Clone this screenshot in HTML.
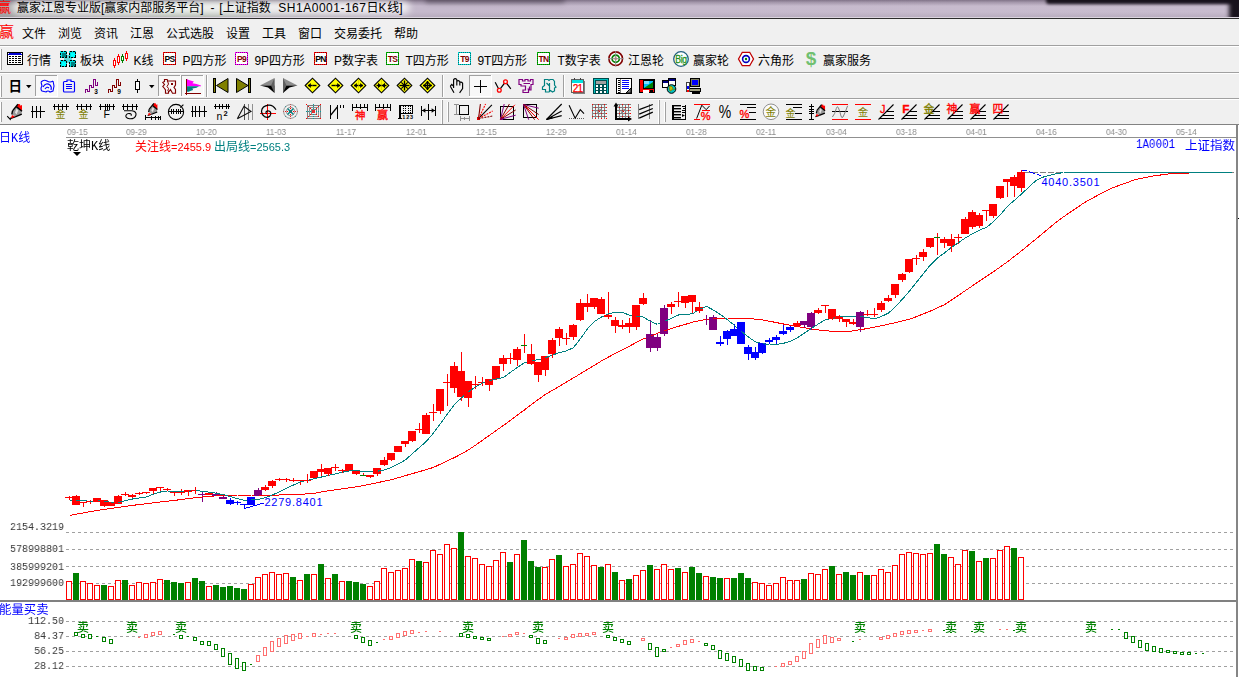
<!DOCTYPE html>
<html lang="zh"><head><meta charset="utf-8"><title>赢家江恩专业版</title>
<style>
html,body{margin:0;padding:0}
body{width:1239px;height:677px;overflow:hidden;background:#fff;position:relative;font-family:"Liberation Sans","Noto Sans CJK SC",sans-serif;font-size:12px;color:#000}
.abs{position:absolute}
#title{position:absolute;left:0;top:0;width:1239px;height:18px;overflow:hidden;
background:
 linear-gradient(to bottom, rgba(86,72,94,.62) 0, rgba(110,96,118,.38) 2.5px, rgba(150,132,156,0) 6px, rgba(120,108,126,0) 12px, rgba(100,90,106,.14) 17px),
 linear-gradient(to right, #a8a8a8 0, #bdbdbd 100px, #b5c0b3 190px, #bdb9c0 290px, #c5b9cc 420px, #c8bcce 1239px);}
#title .blob3{position:absolute;left:425px;top:-3px;width:140px;height:6px;background:rgba(40,30,46,.42);filter:blur(2.5px);border-radius:3px}
#title .blob{position:absolute;left:1046px;top:-4px;width:200px;height:7.5px;background:#18121c;filter:blur(1.6px);border-radius:3px}
#title .blob2{position:absolute;left:1229px;top:-3px;width:14px;height:24px;background:#18121c;filter:blur(2.2px)}
#title .glow{position:absolute;left:12px;top:1px;width:398px;height:13px;border-radius:7px;background:rgba(255,255,255,.78);filter:blur(3.5px)}
#title .tx{position:absolute;left:17px;top:0px;font-size:12px;line-height:16px;white-space:pre;color:#000}
#title .ic{position:absolute;left:-3px;top:-2px;font-size:14px;line-height:18px;color:#ff0000}
#tline{position:absolute;left:0;top:17px;width:1239px;height:1px;background:#dcd5df}
#tline2{position:absolute;left:0;top:18px;width:1239px;height:1px;background:#2c2c2c;box-shadow:0 1px 0 #fafafa}
.bar{position:absolute;left:0;width:1239px;background:#f0f0f0}
.hl{position:absolute;left:0;width:1239px;height:1px}
.menu span{position:absolute;top:8px;line-height:14px;font-size:12px;white-space:nowrap}
.tbt{position:absolute;font-size:12px;line-height:14px;white-space:nowrap}
.grip{position:absolute;width:1px;background:#a0a0a0;box-shadow:-1px 0 0 #fff}
.dt{will-change:transform;position:absolute;top:126.5px;font-size:9px;line-height:10px;color:#8c8c8c;font-family:"Liberation Sans",sans-serif;transform:scaleX(.9);transform-origin:0 0}
.gs{will-change:transform}
.cj{font-family:"Noto Sans CJK SC","WenQuanYi Zen Hei",sans-serif}
.mono{font-family:"Liberation Mono","Noto Sans CJK SC",monospace}
.sell{will-change:transform;position:absolute;top:620px;font-size:12px;line-height:14px;color:#008000;font-weight:500;font-family:"Noto Sans CJK SC",sans-serif}
.ylab{will-change:transform;position:absolute;left:9.5px;width:62.2px;font-family:"Liberation Mono",monospace;font-size:11.5px;line-height:12px;color:#383838;text-align:left;letter-spacing:0px;white-space:pre;transform:scaleX(.87);transform-origin:0 0}
</style></head><body>
<div id="title"><div class="blob"></div><div class="blob3"></div><div class="blob2"></div><div class="glow"></div><span class="ic">赢</span><span class="tx">赢家江恩专业版[赢家内部服务平台]<span style="letter-spacing:3.4px"> </span>-<span style="letter-spacing:1.6px"> </span>[上证指数<span style="letter-spacing:.5px">  SH1A0001-167</span>日<span style="letter-spacing:.8px">K</span>线]</span></div>
<div id="tline"></div><div id="tline2"></div>
<div class="bar menu" style="top:19px;height:26px">
<span style="left:-1px;top:5px;font-size:15px;line-height:16px;color:#ff0000">赢</span>
<span style="left:22px">文件</span><span style="left:58px">浏览</span><span style="left:94px">资讯</span><span style="left:130px">江恩</span><span style="left:166px">公式选股</span><span style="left:226px">设置</span><span style="left:262px">工具</span><span style="left:298px">窗口</span><span style="left:334px">交易委托</span><span style="left:394px">帮助</span>
</div>
<div class="hl" style="top:45px;background:#a0a0a0"></div><div class="hl" style="top:46px;background:#fff"></div>
<div class="bar" style="top:47px;height:25px"></div>
<div class="hl" style="top:72px;background:#a0a0a0"></div><div class="hl" style="top:73px;background:#fff"></div>
<div class="bar" style="top:74px;height:24px"></div>
<div class="hl" style="top:98px;background:#a0a0a0"></div><div class="hl" style="top:99px;background:#fff"></div>
<div class="bar" style="top:100px;height:24px"></div>
<div class="hl" style="top:124px;background:#828282"></div>
<span class="tbt" style="left:27px;top:54px;">行情</span><span class="tbt" style="left:80px;top:54px;">板块</span><span class="tbt" style="left:133.5px;top:54px;">K线</span><span class="tbt" style="left:182.5px;top:54px;">P四方形</span><span class="tbt" style="left:254.5px;top:54px;letter-spacing:-.1px">9P四方形</span><span class="tbt" style="left:334px;top:54px;">P数字表</span><span class="tbt" style="left:405.5px;top:54px;">T四方形</span><span class="tbt" style="left:477.5px;top:54px;letter-spacing:-.1px">9T四方形</span><span class="tbt" style="left:557.5px;top:54px;">T数字表</span><span class="tbt" style="left:628px;top:54px;">江恩轮</span><span class="tbt" style="left:693px;top:54px;">赢家轮</span><span class="tbt" style="left:758px;top:54px;">六角形</span><span class="tbt" style="left:823px;top:54px;">赢家服务</span><svg class="abs" style="left:0;top:0" width="1239" height="125" viewBox="0 0 1239 125"><g shape-rendering="crispEdges"><rect x="1" y="49" width="1" height="21" fill="#a0a0a0"/>
<rect x="0" y="49" width="1" height="21" fill="#ffffff"/>
<rect x="7.5" y="52.5" width="15" height="12" fill="#fff" stroke="#000" stroke-width="1" />
<rect x="8" y="53" width="14" height="2" fill="#0000d0" />
<rect x="8" y="53" width="1" height="1" fill="#fff" />
<rect x="21" y="53" width="1" height="1" fill="#fff" />
<rect x="9" y="56" width="2" height="1" fill="#000" />
<rect x="12" y="56" width="2" height="1" fill="#000" />
<rect x="15" y="56" width="2" height="1" fill="#000" />
<rect x="18" y="56" width="3" height="1" fill="#000" />
<rect x="9" y="58" width="2" height="1" fill="#000" />
<rect x="12" y="58" width="2" height="1" fill="#000" />
<rect x="15" y="58" width="2" height="1" fill="#000" />
<rect x="18" y="58" width="3" height="1" fill="#000" />
<rect x="9" y="60" width="2" height="1" fill="#000" />
<rect x="12" y="60" width="2" height="1" fill="#000" />
<rect x="15" y="60" width="2" height="1" fill="#000" />
<rect x="18" y="60" width="3" height="1" fill="#000" />
<rect x="9" y="62" width="2" height="1" fill="#000" />
<rect x="12" y="62" width="2" height="1" fill="#000" />
<rect x="15" y="62" width="2" height="1" fill="#000" />
<rect x="18" y="62" width="3" height="1" fill="#000" />
<rect x="64" y="55" width="8" height="8" fill="#60d8d8" />
<rect x="60" y="51" width="7" height="7" fill="#00e0e0" />
<rect x="60.5" y="51.5" width="6" height="6" fill="none" stroke="#000" stroke-dasharray="2 1"/>
<rect x="61" y="52" width="5" height="5" fill="#00e0e0" />
<rect x="62" y="53" width="4" height="4" fill="#008080" />
<rect x="69" y="51" width="7" height="7" fill="#00e0e0" />
<rect x="69.5" y="51.5" width="6" height="6" fill="none" stroke="#000" stroke-dasharray="2 1"/>
<rect x="70" y="52" width="5" height="5" fill="#00e0e0" />
<rect x="71" y="53" width="4" height="4" fill="#00ffff" />
<rect x="60" y="60" width="7" height="7" fill="#00e0e0" />
<rect x="60.5" y="60.5" width="6" height="6" fill="none" stroke="#000" stroke-dasharray="2 1"/>
<rect x="61" y="61" width="5" height="5" fill="#00e0e0" />
<rect x="62" y="62" width="4" height="4" fill="#00ffff" />
<rect x="69" y="60" width="7" height="7" fill="#00e0e0" />
<rect x="69.5" y="60.5" width="6" height="6" fill="none" stroke="#000" stroke-dasharray="2 1"/>
<rect x="70" y="61" width="5" height="5" fill="#00e0e0" />
<rect x="71" y="62" width="4" height="4" fill="#008080" />
<rect x="114" y="58" width="1" height="10" fill="#ff0000"/>
<rect x="113.5" y="60.5" width="2" height="5" fill="#fff" stroke="#ff0000" stroke-width="1" />
<rect x="118" y="54" width="1" height="11" fill="#ff0000"/>
<rect x="117.5" y="56.5" width="2" height="6" fill="#fff" stroke="#ff0000" stroke-width="1" />
<rect x="122" y="54" width="1" height="9" fill="#008000"/>
<rect x="121.5" y="56.5" width="2" height="4" fill="#fff" stroke="#008000" stroke-width="1" />
<rect x="126" y="51" width="1" height="10" fill="#ff0000"/>
<rect x="125.5" y="53.5" width="2" height="5" fill="#fff" stroke="#ff0000" stroke-width="1" />
<rect x="163" y="52" width="13" height="13" fill="#fff" />
<rect x="163.5" y="52.5" width="12" height="12" fill="none" stroke="#ff0000"/>
<rect x="163.5" y="52.5" width="12" height="12" fill="none" stroke="#000" stroke-opacity=".45" stroke-dasharray="1 1"/>
<rect x="235" y="52" width="13" height="13" fill="#fff" />
<rect x="235.5" y="52.5" width="12" height="12" fill="none" stroke="#ff00ff"/>
<rect x="235.5" y="52.5" width="12" height="12" fill="none" stroke="#000" stroke-opacity=".45" stroke-dasharray="1 1"/>
<rect x="314" y="52" width="13" height="13" fill="#fff" />
<rect x="314.5" y="52.5" width="12" height="12" fill="none" stroke="#ff0000"/>
<rect x="314.5" y="52.5" width="12" height="12" fill="none" stroke="#000" stroke-opacity=".45" stroke-dasharray="1 1"/>
<rect x="386" y="52" width="13" height="13" fill="#fff" />
<rect x="386.5" y="52.5" width="12" height="12" fill="none" stroke="#00c000"/>
<rect x="386.5" y="52.5" width="12" height="12" fill="none" stroke="#000" stroke-opacity=".45" stroke-dasharray="1 1"/>
<rect x="458" y="52" width="13" height="13" fill="#fff" />
<rect x="458.5" y="52.5" width="12" height="12" fill="none" stroke="#00d8d8"/>
<rect x="458.5" y="52.5" width="12" height="12" fill="none" stroke="#000" stroke-opacity=".45" stroke-dasharray="1 1"/>
<rect x="537" y="52" width="13" height="13" fill="#fff" />
<rect x="537.5" y="52.5" width="12" height="12" fill="none" stroke="#00c000"/>
<rect x="537.5" y="52.5" width="12" height="12" fill="none" stroke="#000" stroke-opacity=".45" stroke-dasharray="1 1"/>
<rect x="1" y="76" width="1" height="21" fill="#a0a0a0"/>
<rect x="0" y="76" width="1" height="21" fill="#ffffff"/>
<rect x="35" y="75" width="23" height="22" fill="#f8f8f8" />
<rect x="35" y="75" width="23" height="1" fill="#a0a0a0"/>
<rect x="35" y="75" width="1" height="22" fill="#a0a0a0"/>
<rect x="35" y="96" width="23" height="1" fill="#fff"/>
<rect x="57" y="75" width="1" height="22" fill="#fff"/>
<rect x="66" y="84.0" width="6" height="1" fill="#0000ff"/>
<rect x="66" y="86.0" width="6" height="1" fill="#0000ff"/>
<rect x="66" y="88.0" width="6" height="1" fill="#0000ff"/>
<polyline points="85.5,93 85.5,89.5 87.5,89.5 87.5,91.5 89.5,91.5 89.5,85.5 91.5,85.5 91.5,87.5 93.5,87.5 93.5,79.5 95.5,79.5 95.5,85.5 97.5,85.5 97.5,81.5" fill="none" stroke="#800080" stroke-width="1.3" />
<polyline points="108.5,93 108.5,89.5 110.5,89.5 110.5,91.5 112.5,91.5 112.5,85.5 114.5,85.5 114.5,87.5 116.5,87.5 116.5,79.5 118.5,79.5 118.5,85.5 120.5,85.5 120.5,81.5" fill="none" stroke="#800000" stroke-width="1.3" />
<rect x="137" y="79" width="1" height="14" fill="#000"/>
<rect x="135.5" y="81.5" width="4" height="8" fill="#fff" stroke="#000" stroke-width="1" />
<rect x="158" y="75" width="23" height="22" fill="#f8f8f8" />
<rect x="158" y="75" width="23" height="1" fill="#a0a0a0"/>
<rect x="158" y="75" width="1" height="22" fill="#a0a0a0"/>
<rect x="158" y="96" width="23" height="1" fill="#fff"/>
<rect x="180" y="75" width="1" height="22" fill="#fff"/>
<rect x="171" y="83" width="2" height="2" fill="#800000" />
<rect x="181" y="75" width="23" height="22" fill="#f8f8f8" />
<rect x="181" y="75" width="23" height="1" fill="#a0a0a0"/>
<rect x="181" y="75" width="1" height="22" fill="#a0a0a0"/>
<rect x="181" y="96" width="23" height="1" fill="#fff"/>
<rect x="203" y="75" width="1" height="22" fill="#fff"/>
<rect x="186" y="79" width="1" height="16" fill="#800000"/>
<rect x="185" y="93" width="16" height="1" fill="#800000"/>
<rect x="206" y="75" width="1" height="22" fill="#a0a0a0"/>
<rect x="207" y="75" width="1" height="22" fill="#ffffff"/>
<rect x="213.5" y="78.5" width="2" height="14" fill="#808000" stroke="#000" stroke-width="1" />
<rect x="248.5" y="78.5" width="2" height="14" fill="#808000" stroke="#000" stroke-width="1" />
<rect x="442" y="75" width="1" height="22" fill="#a0a0a0"/>
<rect x="443" y="75" width="1" height="22" fill="#ffffff"/>
<rect x="469" y="75" width="23" height="22" fill="#f8f8f8" />
<rect x="469" y="75" width="23" height="1" fill="#a0a0a0"/>
<rect x="469" y="75" width="1" height="22" fill="#a0a0a0"/>
<rect x="469" y="96" width="23" height="1" fill="#fff"/>
<rect x="491" y="75" width="1" height="22" fill="#fff"/>
<rect x="474" y="86" width="13" height="1" fill="#000"/>
<rect x="480" y="80" width="1" height="13" fill="#000"/>
<rect x="563" y="75" width="1" height="22" fill="#a0a0a0"/>
<rect x="564" y="75" width="1" height="22" fill="#ffffff"/>
<rect x="573" y="81" width="12" height="13" fill="#808080" />
<rect x="571.5" y="79.5" width="12" height="13" fill="#fff" stroke="#606060" stroke-width="1" />
<rect x="572" y="80" width="11" height="3" fill="#00e0e0" />
<rect x="574" y="78" width="1" height="2" fill="#404040"/>
<rect x="580" y="78" width="1" height="2" fill="#404040"/>
<rect x="593.5" y="78.5" width="15" height="15" fill="#00c0c0" stroke="#004848" stroke-width="1" />
<rect x="595" y="80" width="12" height="13" fill="#005050" />
<rect x="596" y="81" width="10" height="3" fill="#a0a0a0" />
<rect x="596" y="85" width="2" height="2" fill="#fff" />
<rect x="600" y="85" width="2" height="2" fill="#fff" />
<rect x="604" y="85" width="2" height="2" fill="#fff" />
<rect x="596" y="88" width="2" height="2" fill="#fff" />
<rect x="600" y="88" width="2" height="2" fill="#fff" />
<rect x="604" y="88" width="2" height="2" fill="#fff" />
<rect x="596" y="91" width="2" height="2" fill="#fff" />
<rect x="600" y="91" width="2" height="2" fill="#fff" />
<rect x="604" y="91" width="2" height="2" fill="#fff" />
<rect x="616.5" y="78.5" width="15" height="15" fill="#fff" stroke="#000" stroke-width="1" />
<rect x="622" y="80" width="7" height="1" fill="#0000ff"/>
<rect x="622" y="82" width="7" height="1" fill="#0000ff"/>
<rect x="622" y="84" width="7" height="1" fill="#0000ff"/>
<rect x="622" y="86" width="7" height="1" fill="#0000ff"/>
<rect x="622" y="88" width="7" height="1" fill="#0000ff"/>
<rect x="618" y="80" width="2" height="1" fill="#000" />
<rect x="618" y="82" width="2" height="1" fill="#000" />
<rect x="618" y="84" width="2" height="1" fill="#000" />
<rect x="618" y="86" width="2" height="1" fill="#000" />
<rect x="618" y="88" width="2" height="1" fill="#000" />
<rect x="618" y="90" width="2" height="1" fill="#000" />
<rect x="618" y="92" width="2" height="1" fill="#000" />
<rect x="620" y="79" width="1" height="14" fill="#808080"/>
<rect x="639.5" y="79.5" width="15" height="13" fill="#ff0000" stroke="#000" stroke-width="1" />
<rect x="643.5" y="80.5" width="10" height="8" fill="#00c0ff" stroke="#000" stroke-width="1" />
<rect x="644" y="81" width="5" height="3" fill="#80e0ff" />
<rect x="643" y="90" width="6" height="3" fill="#fff" />
<rect x="650" y="90" width="3" height="3" fill="#000" />
<rect x="662.5" y="80.5" width="7" height="7" fill="#fff" stroke="#000" stroke-width="1" />
<rect x="663" y="81" width="6" height="2" fill="#000080" />
<rect x="668.5" y="78.5" width="7" height="7" fill="#fff" stroke="#000" stroke-width="1" />
<rect x="669" y="79" width="6" height="2" fill="#000080" />
<rect x="690.5" y="78.5" width="9" height="8" fill="#808060" stroke="#000" stroke-width="1" />
<rect x="692" y="80" width="6" height="5" fill="#0000ff" />
<rect x="688.5" y="88.5" width="12" height="3" fill="#a0a080" stroke="#000" stroke-width="1" />
<rect x="692" y="92" width="8" height="2" fill="#000" />
<rect x="686.5" y="82.5" width="3" height="9" fill="#fff" stroke="#404040" stroke-width="1" />
<rect x="687" y="86" width="2" height="3" fill="#0000ff" />
<rect x="687" y="90" width="2" height="2" fill="#ff0000" />
<rect x="1" y="102" width="1" height="20" fill="#a0a0a0"/>
<rect x="0" y="102" width="1" height="20" fill="#ffffff"/>
<rect x="31" y="111" width="14" height="1" fill="#000"/>
<rect x="32" y="106" width="1" height="12" fill="#000"/>
<rect x="36" y="106" width="1" height="12" fill="#000"/>
<rect x="40" y="106" width="1" height="12" fill="#000"/>
<rect x="53" y="106" width="16" height="1" fill="#000"/>
<rect x="54" y="104" width="1" height="6" fill="#000"/>
<rect x="58" y="104" width="1" height="6" fill="#000"/>
<rect x="62" y="104" width="1" height="6" fill="#000"/>
<rect x="66" y="104" width="1" height="6" fill="#000"/>
<rect x="76" y="106" width="16" height="1" fill="#000"/>
<rect x="77" y="104" width="1" height="6" fill="#000"/>
<rect x="81" y="104" width="1" height="6" fill="#000"/>
<rect x="86" y="104" width="1" height="6" fill="#000"/>
<rect x="90" y="104" width="1" height="6" fill="#000"/>
<rect x="99" y="106" width="16" height="1" fill="#000"/>
<rect x="100" y="104" width="1" height="6" fill="#000"/>
<rect x="105" y="104" width="1" height="6" fill="#000"/>
<rect x="107" y="104" width="1" height="6" fill="#000"/>
<rect x="109" y="104" width="1" height="6" fill="#000"/>
<rect x="113" y="104" width="1" height="6" fill="#000"/>
<rect x="122" y="106" width="16" height="1" fill="#000"/>
<rect x="123" y="104" width="1" height="6" fill="#000"/>
<rect x="127" y="104" width="1" height="6" fill="#000"/>
<rect x="132" y="104" width="1" height="6" fill="#000"/>
<rect x="136" y="104" width="1" height="6" fill="#000"/>
<rect x="145" y="117" width="16" height="1" fill="#000"/>
<rect x="145" y="115" width="1" height="5" fill="#000"/>
<rect x="151" y="116" width="1" height="4" fill="#000"/>
<rect x="155" y="116" width="1" height="4" fill="#000"/>
<rect x="158" y="116" width="1" height="4" fill="#000"/>
<rect x="160" y="116" width="1" height="4" fill="#000"/>
<rect x="169" y="111" width="15" height="1" fill="#000"/>
<rect x="171" y="109" width="1" height="5" fill="#000"/>
<rect x="173" y="109" width="1" height="5" fill="#000"/>
<rect x="176" y="109" width="1" height="5" fill="#000"/>
<rect x="178" y="109" width="1" height="5" fill="#000"/>
<rect x="180" y="109" width="1" height="5" fill="#000"/>
<rect x="191" y="111" width="16" height="1" fill="#000"/>
<rect x="192" y="106" width="1" height="11" fill="#000"/>
<rect x="195" y="106" width="1" height="11" fill="#000"/>
<rect x="199" y="106" width="1" height="11" fill="#000"/>
<rect x="204" y="106" width="1" height="11" fill="#000"/>
<rect x="214" y="106" width="16" height="1" fill="#000"/>
<rect x="215" y="104" width="1" height="5" fill="#000"/>
<rect x="219" y="104" width="1" height="5" fill="#000"/>
<rect x="222" y="104" width="1" height="5" fill="#000"/>
<rect x="226" y="104" width="1" height="5" fill="#000"/>
<rect x="228" y="104" width="1" height="5" fill="#000"/>
<rect x="244" y="104" width="1" height="16" fill="#505050"/>
<rect x="248" y="104" width="1" height="16" fill="#808080"/>
<rect x="252" y="104" width="1" height="16" fill="#909090"/>
<rect x="260" y="113" width="16" height="1" fill="#ff0000"/>
<rect x="267" y="104" width="1" height="16" fill="#ff0000"/>
<line x1="283.0" y1="111.5" x2="298.0" y2="111.5" stroke="#ff0000" stroke-dasharray="1 1"/>
<line x1="290.5" y1="104.0" x2="290.5" y2="119.0" stroke="#ff0000" stroke-dasharray="1 1"/>
<rect x="285" y="106" width="1" height="1" fill="#00a0a0" />
<rect x="295" y="106" width="1" height="1" fill="#00a0a0" />
<rect x="285" y="116" width="1" height="1" fill="#00a0a0" />
<rect x="295" y="116" width="1" height="1" fill="#00a0a0" />
<rect x="289" y="110" width="3" height="3" fill="#ff0000" />
<rect x="307.0" y="105.0" width="13.0" height="13.0" fill="none" stroke="#808080"/>
<rect x="309.0" y="107.0" width="9.0" height="9.0" fill="none" stroke="#909090"/>
<rect x="311.0" y="109.0" width="5.0" height="5.0" fill="none" stroke="#808080"/>
<line x1="306.0" y1="111.5" x2="321.0" y2="111.5" stroke="#00a0a0" stroke-dasharray="1 1"/>
<line x1="313.5" y1="104.0" x2="313.5" y2="119.0" stroke="#00a0a0" stroke-dasharray="1 1"/>
<rect x="306" y="104" width="1" height="1" fill="#ff0000" />
<rect x="306" y="118" width="1" height="1" fill="#ff0000" />
<rect x="308" y="106" width="1" height="1" fill="#ff0000" />
<rect x="308" y="116" width="1" height="1" fill="#ff0000" />
<rect x="310" y="108" width="1" height="1" fill="#ff0000" />
<rect x="310" y="114" width="1" height="1" fill="#ff0000" />
<rect x="316" y="114" width="1" height="1" fill="#ff0000" />
<rect x="316" y="108" width="1" height="1" fill="#ff0000" />
<rect x="318" y="116" width="1" height="1" fill="#ff0000" />
<rect x="318" y="106" width="1" height="1" fill="#ff0000" />
<rect x="320" y="118" width="1" height="1" fill="#ff0000" />
<rect x="320" y="104" width="1" height="1" fill="#ff0000" />
<rect x="312" y="110" width="3" height="3" fill="#e03030" />
<rect x="330" y="105" width="1" height="14" fill="#000"/>
<rect x="337" y="105" width="1" height="14" fill="#000"/>
<rect x="340" y="105" width="1" height="3" fill="#000"/>
<rect x="343" y="105" width="1" height="3" fill="#000"/>
<rect x="352" y="107" width="16" height="1" fill="#000"/>
<rect x="352" y="104" width="1" height="7" fill="#000"/>
<rect x="356" y="104" width="1" height="4" fill="#000"/>
<rect x="360" y="104" width="1" height="5" fill="#000"/>
<rect x="364" y="104" width="1" height="4" fill="#000"/>
<rect x="367" y="104" width="1" height="7" fill="#000"/>
<rect x="375" y="107" width="16" height="1" fill="#000"/>
<rect x="375" y="104" width="1" height="7" fill="#000"/>
<rect x="379" y="104" width="1" height="4" fill="#000"/>
<rect x="383" y="104" width="1" height="5" fill="#000"/>
<rect x="387" y="104" width="1" height="4" fill="#000"/>
<rect x="390" y="104" width="1" height="7" fill="#000"/>
<rect x="399" y="105" width="1" height="14" fill="#000"/>
<rect x="400" y="105" width="1" height="14" fill="#000"/>
<rect x="412" y="105" width="1" height="9" fill="#000"/>
<rect x="399" y="105" width="14" height="1" fill="#000"/>
<rect x="401" y="113" width="12" height="1" fill="#000"/>
<line x1="403.5" y1="106" x2="403.5" y2="113" stroke="#000" stroke-dasharray="1 1"/>
<line x1="405.5" y1="106" x2="405.5" y2="113" stroke="#000" stroke-dasharray="1 1"/>
<line x1="408.5" y1="106" x2="408.5" y2="113" stroke="#000" stroke-dasharray="1 1"/>
<line x1="410.5" y1="106" x2="410.5" y2="113" stroke="#000" stroke-dasharray="1 1"/>
<rect x="398" y="118" width="4" height="1" fill="#000"/>
<rect x="421" y="106" width="1" height="10" fill="#000"/>
<rect x="428" y="104" width="1" height="16" fill="#000"/>
<rect x="435" y="106" width="1" height="10" fill="#000"/>
<rect x="421" y="110" width="15" height="1" fill="#000"/>
<rect x="441" y="100" width="1" height="24" fill="#fff"/>
<rect x="442" y="100" width="1" height="24" fill="#a0a0a0"/>
<rect x="448" y="102" width="1" height="20" fill="#a0a0a0"/>
<rect x="447" y="102" width="1" height="20" fill="#ffffff"/>
<rect x="459.5" y="105.5" width="9" height="9" fill="none" stroke="#000" stroke-width="1.5"/>
<rect x="456" y="104" width="1" height="11" fill="#909090"/>
<rect x="454" y="104" width="5" height="1" fill="#909090"/>
<rect x="454" y="114" width="5" height="1" fill="#909090"/>
<rect x="460" y="118" width="10" height="1" fill="#909090"/>
<rect x="460" y="116" width="1" height="5" fill="#909090"/>
<rect x="469" y="116" width="1" height="5" fill="#909090"/>
<rect x="464" y="117" width="1" height="3" fill="#909090"/>
<rect x="477" y="117" width="3" height="3" fill="#e00000" />
<rect x="500.5" y="106.5" width="13" height="13" fill="none" stroke="#000" stroke-width="1.5"/>
<rect x="500" y="117" width="3" height="3" fill="#800080" />
<rect x="523.5" y="104.5" width="13" height="13" fill="none" stroke="#000" stroke-width="1.5"/>
<line x1="569" y1="118.5" x2="585" y2="118.5" stroke="#606060" stroke-dasharray="1 1"/>
<rect x="592" y="104" width="15" height="15" fill="#808080" />
<rect x="593" y="105" width="2" height="2" fill="#f4f4f4" />
<rect x="593" y="108" width="2" height="2" fill="#f4f4f4" />
<rect x="593" y="111" width="2" height="2" fill="#f4f4f4" />
<rect x="593" y="114" width="2" height="2" fill="#f4f4f4" />
<rect x="593" y="117" width="2" height="2" fill="#f4f4f4" />
<rect x="596" y="105" width="2" height="2" fill="#f4f4f4" />
<rect x="596" y="108" width="2" height="2" fill="#f4f4f4" />
<rect x="596" y="111" width="2" height="2" fill="#f4f4f4" />
<rect x="596" y="114" width="2" height="2" fill="#f4f4f4" />
<rect x="596" y="117" width="2" height="2" fill="#f4f4f4" />
<rect x="599" y="105" width="2" height="2" fill="#f4f4f4" />
<rect x="599" y="108" width="2" height="2" fill="#f4f4f4" />
<rect x="599" y="111" width="2" height="2" fill="#f4f4f4" />
<rect x="599" y="114" width="2" height="2" fill="#f4f4f4" />
<rect x="599" y="117" width="2" height="2" fill="#f4f4f4" />
<rect x="602" y="105" width="2" height="2" fill="#f4f4f4" />
<rect x="602" y="108" width="2" height="2" fill="#f4f4f4" />
<rect x="602" y="111" width="2" height="2" fill="#f4f4f4" />
<rect x="602" y="114" width="2" height="2" fill="#f4f4f4" />
<rect x="602" y="117" width="2" height="2" fill="#f4f4f4" />
<rect x="605" y="105" width="2" height="2" fill="#f4f4f4" />
<rect x="605" y="108" width="2" height="2" fill="#f4f4f4" />
<rect x="605" y="111" width="2" height="2" fill="#f4f4f4" />
<rect x="605" y="114" width="2" height="2" fill="#f4f4f4" />
<rect x="605" y="117" width="2" height="2" fill="#f4f4f4" />
<rect x="592" y="104" width="1" height="1" fill="#ff0000" />
<rect x="592" y="110" width="1" height="1" fill="#ff0000" />
<rect x="592" y="116" width="1" height="1" fill="#ff0000" />
<rect x="595" y="107" width="1" height="1" fill="#ff0000" />
<rect x="595" y="113" width="1" height="1" fill="#ff0000" />
<rect x="595" y="118" width="1" height="1" fill="#ff0000" />
<rect x="598" y="104" width="1" height="1" fill="#ff0000" />
<rect x="598" y="110" width="1" height="1" fill="#ff0000" />
<rect x="598" y="116" width="1" height="1" fill="#ff0000" />
<rect x="601" y="107" width="1" height="1" fill="#ff0000" />
<rect x="601" y="113" width="1" height="1" fill="#ff0000" />
<rect x="601" y="118" width="1" height="1" fill="#ff0000" />
<rect x="604" y="104" width="1" height="1" fill="#ff0000" />
<rect x="604" y="110" width="1" height="1" fill="#ff0000" />
<rect x="604" y="116" width="1" height="1" fill="#ff0000" />
<rect x="606" y="107" width="1" height="1" fill="#ff0000" />
<rect x="606" y="113" width="1" height="1" fill="#ff0000" />
<rect x="606" y="118" width="1" height="1" fill="#ff0000" />
<rect x="599" y="111" width="1" height="1" fill="#ff0000" />
<rect x="616" y="104" width="15" height="15" fill="#808080" />
<rect x="617" y="105" width="2" height="2" fill="#f4f4f4" />
<rect x="617" y="108" width="2" height="2" fill="#f4f4f4" />
<rect x="617" y="111" width="2" height="2" fill="#f4f4f4" />
<rect x="617" y="114" width="2" height="2" fill="#f4f4f4" />
<rect x="617" y="117" width="2" height="2" fill="#f4f4f4" />
<rect x="620" y="105" width="2" height="2" fill="#f4f4f4" />
<rect x="620" y="108" width="2" height="2" fill="#f4f4f4" />
<rect x="620" y="111" width="2" height="2" fill="#f4f4f4" />
<rect x="620" y="114" width="2" height="2" fill="#f4f4f4" />
<rect x="620" y="117" width="2" height="2" fill="#f4f4f4" />
<rect x="623" y="105" width="2" height="2" fill="#f4f4f4" />
<rect x="623" y="108" width="2" height="2" fill="#f4f4f4" />
<rect x="623" y="111" width="2" height="2" fill="#f4f4f4" />
<rect x="623" y="114" width="2" height="2" fill="#f4f4f4" />
<rect x="623" y="117" width="2" height="2" fill="#f4f4f4" />
<rect x="626" y="105" width="2" height="2" fill="#f4f4f4" />
<rect x="626" y="108" width="2" height="2" fill="#f4f4f4" />
<rect x="626" y="111" width="2" height="2" fill="#f4f4f4" />
<rect x="626" y="114" width="2" height="2" fill="#f4f4f4" />
<rect x="626" y="117" width="2" height="2" fill="#f4f4f4" />
<rect x="629" y="105" width="2" height="2" fill="#f4f4f4" />
<rect x="629" y="108" width="2" height="2" fill="#f4f4f4" />
<rect x="629" y="111" width="2" height="2" fill="#f4f4f4" />
<rect x="629" y="114" width="2" height="2" fill="#f4f4f4" />
<rect x="629" y="117" width="2" height="2" fill="#f4f4f4" />
<rect x="616" y="104" width="1" height="1" fill="#ff0000" />
<rect x="616" y="110" width="1" height="1" fill="#ff0000" />
<rect x="616" y="116" width="1" height="1" fill="#ff0000" />
<rect x="619" y="107" width="1" height="1" fill="#ff0000" />
<rect x="619" y="113" width="1" height="1" fill="#ff0000" />
<rect x="619" y="118" width="1" height="1" fill="#ff0000" />
<rect x="622" y="104" width="1" height="1" fill="#ff0000" />
<rect x="622" y="110" width="1" height="1" fill="#ff0000" />
<rect x="622" y="116" width="1" height="1" fill="#ff0000" />
<rect x="625" y="107" width="1" height="1" fill="#ff0000" />
<rect x="625" y="113" width="1" height="1" fill="#ff0000" />
<rect x="625" y="118" width="1" height="1" fill="#ff0000" />
<rect x="628" y="104" width="1" height="1" fill="#ff0000" />
<rect x="628" y="110" width="1" height="1" fill="#ff0000" />
<rect x="628" y="116" width="1" height="1" fill="#ff0000" />
<rect x="630" y="107" width="1" height="1" fill="#ff0000" />
<rect x="630" y="113" width="1" height="1" fill="#ff0000" />
<rect x="630" y="118" width="1" height="1" fill="#ff0000" />
<rect x="623" y="111" width="1" height="1" fill="#ff0000" />
<rect x="615" y="105" width="1" height="15" fill="#000"/>
<rect x="616" y="105" width="1" height="15" fill="#000"/>
<rect x="615" y="118" width="15" height="1" fill="#000"/>
<rect x="615" y="119" width="15" height="1" fill="#000"/>
<rect x="638" y="104" width="1" height="15" fill="#808080"/>
<rect x="649" y="104" width="1" height="15" fill="#808080"/>
<rect x="658" y="100" width="1" height="24" fill="#fff"/>
<rect x="659" y="100" width="1" height="24" fill="#a0a0a0"/>
<rect x="665" y="102" width="1" height="20" fill="#a0a0a0"/>
<rect x="664" y="102" width="1" height="20" fill="#ffffff"/>
<rect x="672" y="105" width="1" height="15" fill="#000"/>
<rect x="673" y="105" width="1" height="15" fill="#000"/>
<rect x="674" y="105" width="7" height="1" fill="#000" />
<rect x="674" y="106" width="7" height="1" fill="#909090" />
<rect x="674" y="108" width="7" height="1" fill="#000" />
<rect x="674" y="109" width="7" height="1" fill="#909090" />
<rect x="674" y="111" width="7" height="1" fill="#000" />
<rect x="674" y="112" width="7" height="1" fill="#909090" />
<rect x="674" y="114" width="7" height="1" fill="#000" />
<rect x="674" y="115" width="7" height="1" fill="#909090" />
<rect x="674" y="117" width="7" height="1" fill="#000" />
<rect x="674" y="118" width="7" height="1" fill="#909090" />
<rect x="672" y="119" width="14" height="1" fill="#000"/>
<rect x="685" y="105" width="1" height="15" fill="#000"/>
<rect x="682" y="106" width="3" height="1" fill="#000" />
<rect x="683" y="108" width="2" height="1" fill="#000" />
<rect x="682" y="110" width="3" height="1" fill="#000" />
<rect x="682" y="112" width="3" height="1" fill="#000" />
<rect x="694" y="104" width="16" height="1" fill="#ff0000"/>
<rect x="694" y="119" width="6" height="1" fill="#ff0000"/>
<rect x="702" y="110" width="8" height="1" fill="#ff0000"/>
<rect x="740" y="104" width="16" height="1" fill="#000"/>
<rect x="740" y="119" width="16" height="1" fill="#000"/>
<rect x="747" y="107" width="9" height="1" fill="#000"/>
<rect x="749" y="112" width="7" height="1" fill="#000"/>
<rect x="786" y="104" width="16" height="1" fill="#000"/>
<rect x="786" y="119" width="16" height="1" fill="#000"/>
<rect x="793" y="107" width="9" height="1" fill="#000"/>
<rect x="795" y="113" width="7" height="1" fill="#000"/>
<rect x="811" y="104" width="1" height="16" fill="#000"/>
<rect x="809" y="106" width="5" height="1" fill="#000"/>
<rect x="809" y="109" width="5" height="1" fill="#000"/>
<rect x="809" y="111" width="5" height="1" fill="#000"/>
<rect x="809" y="113" width="5" height="1" fill="#000"/>
<rect x="809" y="119" width="5" height="1" fill="#000"/>
<rect x="832" y="104" width="16" height="1" fill="#ff0000"/>
<rect x="832" y="119" width="16" height="1" fill="#ff0000"/>
<rect x="832" y="111" width="16" height="1" fill="#000"/>
<rect x="855" y="104" width="16" height="1" fill="#ff0000"/>
<rect x="855" y="119" width="16" height="1" fill="#ff0000"/>
<rect x="886" y="111" width="8" height="1" fill="#000"/>
<rect x="882" y="115" width="12" height="1" fill="#000"/>
<rect x="879" y="118" width="15" height="1" fill="#000"/>
<rect x="909" y="111" width="8" height="1" fill="#000"/>
<rect x="905" y="115" width="12" height="1" fill="#000"/>
<rect x="902" y="118" width="15" height="1" fill="#000"/>
<rect x="932" y="111" width="8" height="1" fill="#000"/>
<rect x="928" y="115" width="12" height="1" fill="#000"/>
<rect x="925" y="118" width="15" height="1" fill="#000"/>
<rect x="955" y="111" width="8" height="1" fill="#000"/>
<rect x="951" y="115" width="12" height="1" fill="#000"/>
<rect x="948" y="118" width="15" height="1" fill="#000"/>
<rect x="978" y="111" width="8" height="1" fill="#000"/>
<rect x="974" y="115" width="12" height="1" fill="#000"/>
<rect x="971" y="118" width="15" height="1" fill="#000"/>
<rect x="1001" y="111" width="8" height="1" fill="#000"/>
<rect x="997" y="115" width="12" height="1" fill="#000"/>
<rect x="994" y="118" width="15" height="1" fill="#000"/></g><g><text x="169.5" y="62" font-size="8.5" fill="#000" font-weight="bold" font-family="Liberation Sans,Noto Sans CJK SC,sans-serif" text-anchor="middle" letter-spacing="-0.7">PS</text>
<text x="241.5" y="62" font-size="8.5" fill="#800000" font-weight="bold" font-family="Liberation Sans,Noto Sans CJK SC,sans-serif" text-anchor="middle" letter-spacing="-0.7">P9</text>
<text x="320.5" y="62" font-size="8.5" fill="#000" font-weight="bold" font-family="Liberation Sans,Noto Sans CJK SC,sans-serif" text-anchor="middle" letter-spacing="-0.7">PN</text>
<text x="392.5" y="62" font-size="8.5" fill="#800000" font-weight="bold" font-family="Liberation Sans,Noto Sans CJK SC,sans-serif" text-anchor="middle" letter-spacing="-0.7">TS</text>
<text x="464.5" y="62" font-size="8.5" fill="#800000" font-weight="bold" font-family="Liberation Sans,Noto Sans CJK SC,sans-serif" text-anchor="middle" letter-spacing="-0.7">T9</text>
<text x="543.5" y="62" font-size="8.5" fill="#800000" font-weight="bold" font-family="Liberation Sans,Noto Sans CJK SC,sans-serif" text-anchor="middle" letter-spacing="-0.7">TN</text>
<circle cx="615.7" cy="58.7" r="6.8" fill="#fff" stroke="#800000" stroke-width="1.6"/>
<circle cx="615.7" cy="58.7" r="3.6" fill="#fff" stroke="#008000" stroke-width="1.7"/>
<circle cx="615.7" cy="58.7" r="1.4" fill="#ff8060" stroke="none" stroke-width="0"/>
<line x1="608" y1="58.7" x2="623.4" y2="58.7" stroke="#909090" stroke-width="1" />
<line x1="615.7" y1="51" x2="615.7" y2="66.4" stroke="#909090" stroke-width="1" />
<circle cx="681" cy="59" r="7.3" fill="#fff" stroke="#206080" stroke-width="1.3"/>
<g transform="translate(681,62.6) scale(.82,1)">
<text x="0" y="0" font-size="10.5" fill="#209020" font-weight="normal" font-family="Liberation Sans,Noto Sans CJK SC,sans-serif" text-anchor="middle" letter-spacing="-0.4" stroke="#209020" stroke-width=".3">Big</text>
</g>
<polygon points="738.5,59 742.3,52.3 749.7,52.3 753.5,59 749.7,65.7 742.3,65.7" fill="#fff" stroke="#c00000" stroke-width="1.3" />
<circle cx="746" cy="59" r="3.4" fill="#fff" stroke="#0000c0" stroke-width="1.6"/>
<circle cx="746" cy="59" r="1.2" fill="#008000" stroke="none" stroke-width="0"/>
<text x="811" y="65.3" font-size="19" fill="#70c070" font-weight="bold" font-family="Liberation Sans,Noto Sans CJK SC,sans-serif" text-anchor="middle" >$</text>
<text x="8.5" y="91" font-size="13.5" fill="#000" font-weight="bold" font-family="Noto Sans CJK SC,Noto Sans CJK SC,sans-serif" text-anchor="start" >日</text>
<polygon points="26,85 31.5,85 28.75,88.2" fill="#000" stroke="none" stroke-width="0" />
<path d="M41,82 Q44,79 47,81 T53,81 M41,82 L42,86 Q40,89 42,91 L46,92 Q48,90 50,92 L53,91 L54,86 L53,81 M43,87 Q46,82 50,85 Q52,87 51,90 M45,89 Q47,86 49,88" fill="none" stroke="#0000ff" stroke-width="1.1" />
<path d="M64.5,81.5 h2.5 v-1.5 h4 v1.5 h2.5 a1,1 0 0 1 1,1 v8.5 a1,1 0 0 1 -1,1 h-9 a1,1 0 0 1 -1,-1 v-8.5 a1,1 0 0 1 1,-1 z" fill="none" stroke="#0000ff" stroke-width="1.15" />
<text x="94.3" y="94" font-size="6.5" fill="#000" font-weight="bold" font-family="Liberation Sans,Noto Sans CJK SC,sans-serif" text-anchor="start" >3</text>
<text x="117.3" y="94" font-size="6.5" fill="#000" font-weight="bold" font-family="Liberation Sans,Noto Sans CJK SC,sans-serif" text-anchor="start" >9</text>
<polygon points="149,85 154.5,85 151.75,88.2" fill="#000" stroke="none" stroke-width="0" />
<polyline points="167.5,79.5 164.5,79.5 164.5,81.5 162.8,82.5 164.5,84.5 162.8,86.5 164.5,88.5 165.5,90 165.5,93.2 168.5,93.2 168.5,91.5 169,91.5 170.5,89.5 172.5,93.2 175.5,93.2 175.5,89.5 174,87.5 175.5,85 175.5,81 167.5,81 167.5,79.5" fill="none" stroke="#800000" stroke-width="1.15" />
<polyline points="167.5,81 168.5,84 167,86.5 168.5,88.5 167.8,91" fill="none" stroke="#800000" stroke-width="1.0" />
<polygon points="187,79 188.7,80 193.9,81.4 192.4,83.3 196.5,84 201,85.5 201,86.2 187,86.2" fill="#ff00ff" stroke="none" stroke-width="0" />
<polygon points="187,86.2 199,86.2 196.5,87.7 192.4,88.5 193.1,90 190.9,90.7 188.7,91.8 187,91.8" fill="#008080" stroke="none" stroke-width="0" />
<polygon points="228,78.5 228,92.5 216.5,85.5" fill="#808000" stroke="#000" stroke-width="1" />
<polygon points="236.5,78.5 236.5,92.5 248,85.5" fill="#808000" stroke="#000" stroke-width="1" />
<polygon points="274.5,78 260,85.5 274.5,85.5" fill="#8c8c8c" stroke="none" stroke-width="0" />
<polygon points="260,85.5 274.5,85.5 274.5,93 268,87.5" fill="#000" stroke="none" stroke-width="0" />
<polygon points="274.5,78 271,85.5 274.5,93" fill="#606060" stroke="none" stroke-width="0" />
<polygon points="283,78 297.5,85.5 283,85.5" fill="#8c8c8c" stroke="none" stroke-width="0" />
<polygon points="297.5,85.5 283,85.5 283,93 289.5,87.5" fill="#000" stroke="none" stroke-width="0" />
<polygon points="283,78 286.5,85.5 283,93" fill="#606060" stroke="none" stroke-width="0" />
<polygon points="305.2,85.5 312.5,78.2 319.8,85.5 312.5,92.8" fill="#ffff00" stroke="#000" stroke-width="1.1" />
<line x1="316.5" y1="85.5" x2="312.5" y2="85.5" stroke="#000" stroke-width="1.4" />
<line x1="312.5" y1="85.5" x2="308.0" y2="85.5" stroke="#000" stroke-width="1.4" />
<polygon points="308.0,85.5 310.8,82.9 310.8,88.1" fill="#000" stroke="none" stroke-width="0" />
<polygon points="328.2,85.5 335.5,78.2 342.8,85.5 335.5,92.8" fill="#ffff00" stroke="#000" stroke-width="1.1" />
<line x1="331.5" y1="85.5" x2="335.5" y2="85.5" stroke="#000" stroke-width="1.4" />
<line x1="335.5" y1="85.5" x2="340.0" y2="85.5" stroke="#000" stroke-width="1.4" />
<polygon points="340.0,85.5 337.2,88.1 337.2,82.9" fill="#000" stroke="none" stroke-width="0" />
<polygon points="351.2,85.5 358.5,78.2 365.8,85.5 358.5,92.8" fill="#ffff00" stroke="#000" stroke-width="1.1" />
<line x1="358.5" y1="85.5" x2="354.0" y2="85.5" stroke="#000" stroke-width="1.4" />
<polygon points="354.0,85.5 356.8,82.9 356.8,88.1" fill="#000" stroke="none" stroke-width="0" />
<line x1="358.5" y1="85.5" x2="363.0" y2="85.5" stroke="#000" stroke-width="1.4" />
<polygon points="363.0,85.5 360.2,88.1 360.2,82.9" fill="#000" stroke="none" stroke-width="0" />
<line x1="358.5" y1="80.5" x2="358.5" y2="90.5" stroke="#c0c000" stroke-width="1" stroke-dasharray="1 1"/>
<polygon points="374.2,85.5 381.5,78.2 388.8,85.5 381.5,92.8" fill="#ffff00" stroke="#000" stroke-width="1.1" />
<line x1="376.5" y1="85.5" x2="386.5" y2="85.5" stroke="#000" stroke-width="1.4" />
<polygon points="381.0,85.5 378.0,82.7 378.0,88.3" fill="#000" stroke="none" stroke-width="0" />
<polygon points="382.0,85.5 385.0,82.7 385.0,88.3" fill="#000" stroke="none" stroke-width="0" />
<line x1="381.5" y1="80.5" x2="381.5" y2="90.5" stroke="#c0c000" stroke-width="1" stroke-dasharray="1 1"/>
<polygon points="397.2,85.5 404.5,78.2 411.8,85.5 404.5,92.8" fill="#ffff00" stroke="#000" stroke-width="1.1" />
<line x1="399.5" y1="85.5" x2="409.5" y2="85.5" stroke="#000" stroke-width="1.4" />
<line x1="404.5" y1="80.5" x2="404.5" y2="90.5" stroke="#000" stroke-width="1.4" />
<line x1="401.3" y1="82.3" x2="407.7" y2="88.7" stroke="#000" stroke-width="1.2" />
<line x1="401.3" y1="88.7" x2="407.7" y2="82.3" stroke="#000" stroke-width="1.2" />
<polygon points="420.2,85.5 427.5,78.2 434.8,85.5 427.5,92.8" fill="#ffff00" stroke="#000" stroke-width="1.1" />
<line x1="427.5" y1="85.5" x2="423.0" y2="85.5" stroke="#000" stroke-width="1.4" />
<polygon points="423.0,85.5 425.8,82.9 425.8,88.1" fill="#000" stroke="none" stroke-width="0" />
<line x1="427.5" y1="85.5" x2="432.0" y2="85.5" stroke="#000" stroke-width="1.4" />
<polygon points="432.0,85.5 429.2,88.1 429.2,82.9" fill="#000" stroke="none" stroke-width="0" />
<line x1="427.5" y1="85.5" x2="427.5" y2="81.0" stroke="#000" stroke-width="1.4" />
<polygon points="427.5,81.0 430.1,83.8 424.9,83.8" fill="#000" stroke="none" stroke-width="0" />
<line x1="427.5" y1="85.5" x2="427.5" y2="90.0" stroke="#000" stroke-width="1.4" />
<polygon points="427.5,90.0 424.9,87.2 430.1,87.2" fill="#000" stroke="none" stroke-width="0" />
<path d="M450.3,86.2 L451.8,84.3 L453.6,86.3 M453.6,88 V79.6 Q455.2,77.6 456.8,79.6 V85.5 M456.8,81.2 Q458.3,80 459.8,81.6 V85.5 M459.8,82.6 Q461.3,81.6 462.6,83.2 V88.5 L459.6,92.8 M450.3,86.2 L454,92.8" fill="none" stroke="#000" stroke-width="1.15" />
<polyline points="495.2,82.2 499.3,90.2 505.5,81.8 510.8,88.8" fill="none" stroke="#000" stroke-width="1.2" />
<circle cx="499.3" cy="90.2" r="1.9" fill="#f0f0f0" stroke="#ff0000" stroke-width="1.3"/>
<circle cx="505.5" cy="81.8" r="1.9" fill="#f0f0f0" stroke="#ff0000" stroke-width="1.3"/>
<path d="M519,79.5 h3.5 v1.5 h2.5 v-1.5 h3 v1.5 h2.5 v-1.5 h2.5 v5 h-2 v5.5 h-2.5 v2.5 h-5.5 v-2.5 h2.5 v-4 h-4.5 v-1.5 h-2 z M523.5,83.5 h6.5 M529.5,86.5 v2.5 h-2" fill="none" stroke="#800080" stroke-width="1.2" />
<path d="M544.5,79.5 h3.5 l1,1 l1,-1 h3 l1.5,2 v3.5 l1.5,2 l-1.5,1 v3 l-2,1 l-2,-1.5 l-1.5,1.5 h-3.5 v-2.5 h-3 v-2.5 l2,-1.5 v-3.5 z M546.5,83 l3,3 M549.5,83 v8" fill="none" stroke="#008080" stroke-width="1.2" />
<text x="577.6" y="91.5" font-size="10" fill="#ff0000" font-weight="normal" font-family="Liberation Sans,Noto Sans CJK SC,sans-serif" text-anchor="middle" letter-spacing="-0.6" stroke="#ff0000" stroke-width=".25">21</text>
<polygon points="626,93 631,88 631,93" fill="#808080" stroke="#000" stroke-width="1" />
<polygon points="644,88 653,88 653,82" fill="#008000" stroke="none" stroke-width="0" />
<circle cx="671.5" cy="89" r="4.3" fill="#00c0c0" stroke="#000" stroke-width="1"/>
<path d="M669,87 l2,-1 l2,2 l-1,2 l-2,1 z M673,90 l2,-1" fill="#c0c000" stroke="#808000" stroke-width="0.8" />
<g transform="translate(7,104) scale(1.0)">
<polygon points="9.3,2.5 11.1,0 13,0.2 13.4,1.7 15,1.1 15,7.3" fill="#ff0000" stroke="none" stroke-width="0" />
<polygon points="9.3,2.8 14.8,7.3 14.5,10.6 8.2,12.5 5,10.2 5.9,6.9" fill="#989898" stroke="none" stroke-width="0" />
<polygon points="9.6,4.5 8,8.5 9.5,10.5 11.2,6.5" fill="#e4e4e4" stroke="none" stroke-width="0" />
<line x1="10.9" y1="0.2" x2="5.5" y2="6.9" stroke="#000" stroke-width="1.4" />
<line x1="5.5" y1="6.9" x2="4.8" y2="10.5" stroke="#000" stroke-width="1.4" />
<line x1="9.3" y1="2.6" x2="15" y2="7.3" stroke="#000" stroke-width="1.4" />
<line x1="14.8" y1="10.2" x2="8.2" y2="12.8" stroke="#000" stroke-width="1.4" />
<line x1="8.2" y1="12.8" x2="3.7" y2="14.3" stroke="#000" stroke-width="1.4" />
<polygon points="5,11 7.8,12.5 6.3,13.6 3.9,14.3" fill="#ff0000" stroke="none" stroke-width="0" />
</g>
<polyline points="7.2,116.2 10.3,119.5 10.9,117.8" fill="none" stroke="#000" stroke-width="1.1" />
<text x="60.5" y="118" font-size="10" fill="#808000" font-weight="normal" font-family="Noto Sans CJK SC,Noto Sans CJK SC,sans-serif" text-anchor="middle" >金</text>
<text x="83.5" y="118" font-size="10" fill="#808000" font-weight="normal" font-family="Noto Sans CJK SC,Noto Sans CJK SC,sans-serif" text-anchor="middle" >金</text>
<text x="103.6" y="117.8" font-size="10.5" fill="#000" font-weight="normal" font-family="Liberation Sans,Noto Sans CJK SC,sans-serif" text-anchor="start" >F</text>
<path d="M124,110.8 h8 q4.5,.8 4,4 q-1,4.3 -6.5,4 q-4.5,-1 -3.5,-3.6 q1.2,-2.2 4,-1.6 q2,.8 1,2.2" fill="none" stroke="#000" stroke-width="1.1" />
<g transform="translate(144.5,103.2) scale(0.86)">
<polygon points="9.3,2.5 11.1,0 13,0.2 13.4,1.7 15,1.1 15,7.3" fill="#ff0000" stroke="none" stroke-width="0" />
<polygon points="9.3,2.8 14.8,7.3 14.5,10.6 8.2,12.5 5,10.2 5.9,6.9" fill="#989898" stroke="none" stroke-width="0" />
<polygon points="9.6,4.5 8,8.5 9.5,10.5 11.2,6.5" fill="#e4e4e4" stroke="none" stroke-width="0" />
<line x1="10.9" y1="0.2" x2="5.5" y2="6.9" stroke="#000" stroke-width="1.4" />
<line x1="5.5" y1="6.9" x2="4.8" y2="10.5" stroke="#000" stroke-width="1.4" />
<line x1="9.3" y1="2.6" x2="15" y2="7.3" stroke="#000" stroke-width="1.4" />
<line x1="14.8" y1="10.2" x2="8.2" y2="12.8" stroke="#000" stroke-width="1.4" />
<line x1="8.2" y1="12.8" x2="3.7" y2="14.3" stroke="#000" stroke-width="1.4" />
<polygon points="5,11 7.8,12.5 6.3,13.6 3.9,14.3" fill="#ff0000" stroke="none" stroke-width="0" />
</g>
<circle cx="176" cy="112" r="7.6" fill="none" stroke="#000" stroke-width="1.1"/>
<line x1="180.3" y1="107.6" x2="183.4" y2="104.6" stroke="#000" stroke-width="1.1" />
<text x="216.6" y="119.7" font-size="10.5" fill="#000" font-weight="normal" font-family="Liberation Sans,Noto Sans CJK SC,sans-serif" text-anchor="start" >n</text>
<text x="223.5" y="116" font-size="7.5" fill="#000" font-weight="bold" font-family="Liberation Sans,Noto Sans CJK SC,sans-serif" text-anchor="start" >2</text>
<polyline points="237.3,118.8 244,106.3 251,111.5 237.3,118.8" fill="none" stroke="#101010" stroke-width="1.1" />
<path d="M276,109.7 Q273,104.8 268.5,105.2 Q262,106 261.5,111.3 Q261.8,115 264.5,116.6 Q268,118.3 270,116 Q271.8,113 269.6,111.3 Q267.5,110.2 266,112 Q265.6,113.4 266.9,113.9" fill="none" stroke="#000" stroke-width="1.2" />
<circle cx="290.5" cy="111.5" r="6.9" fill="none" stroke="#909090" stroke-width="0.9"/>
<circle cx="290.5" cy="111.5" r="4.2" fill="none" stroke="#909090" stroke-width="0.9"/>
<line x1="287.5" y1="108.5" x2="293.5" y2="114.5" stroke="#008080" stroke-width="1.4" />
<line x1="287.5" y1="114.5" x2="293.5" y2="108.5" stroke="#008080" stroke-width="1.4" />
<line x1="330.8" y1="115" x2="337.3" y2="107" stroke="#000" stroke-width="1.2" />
<text x="360.2" y="119" font-size="10.5" fill="#ff0000" font-weight="normal" font-family="Noto Sans CJK SC,Noto Sans CJK SC,sans-serif" text-anchor="middle" stroke="#ff0000" stroke-width=".3">神</text>
<text x="382.5" y="119" font-size="11" fill="#ff0000" font-weight="normal" font-family="Noto Sans CJK SC,Noto Sans CJK SC,sans-serif" text-anchor="middle" stroke="#ff0000" stroke-width=".3">赢</text>
<text x="402.2" y="119" font-size="5.5" fill="#000" font-weight="bold" font-family="Liberation Sans,Noto Sans CJK SC,sans-serif" text-anchor="start" letter-spacing="0.9">123</text>
<polygon points="422,110.5 425.4,108.3 425.4,112.7" fill="#000" stroke="none" stroke-width="0" />
<polygon points="435,110.5 431.6,108.3 431.6,112.7" fill="#000" stroke="none" stroke-width="0" />
<line x1="478.5" y1="118.6" x2="480.4" y2="104" stroke="#800000" stroke-width="1.1" />
<line x1="478.5" y1="118.6" x2="485.6" y2="104" stroke="#ff0000" stroke-width="1.1" stroke-dasharray="2 1"/>
<line x1="478.5" y1="118.6" x2="491.9" y2="104.8" stroke="#000" stroke-width="1.1" />
<line x1="478.5" y1="118.6" x2="492.6" y2="111.1" stroke="#ff0000" stroke-width="1.1" stroke-dasharray="2 1"/>
<line x1="478.5" y1="118.6" x2="492.6" y2="116" stroke="#800000" stroke-width="1.1" stroke-dasharray="2 1"/>
<line x1="500.5" y1="119.3" x2="504.2" y2="104" stroke="#800080" stroke-width="1.0" />
<line x1="500.5" y1="119.3" x2="509.4" y2="104" stroke="#800000" stroke-width="1.0" />
<line x1="500.5" y1="119.3" x2="514.9" y2="104.8" stroke="#ff0000" stroke-width="1.0" />
<line x1="500.5" y1="119.3" x2="515.7" y2="110" stroke="#800000" stroke-width="1.0" />
<line x1="500.5" y1="119.3" x2="515.7" y2="115.2" stroke="#800080" stroke-width="1.0" />
<line x1="523.5" y1="104.5" x2="538.7" y2="108.2" stroke="#800080" stroke-width="1.0" />
<line x1="523.5" y1="104.5" x2="538.7" y2="114.5" stroke="#800000" stroke-width="1.0" />
<line x1="523.5" y1="104.5" x2="538.7" y2="119.7" stroke="#ff0000" stroke-width="1.0" />
<line x1="523.5" y1="104.5" x2="534.6" y2="119.7" stroke="#800000" stroke-width="1.0" />
<line x1="523.5" y1="104.5" x2="528.7" y2="119.7" stroke="#800080" stroke-width="1.0" />
<line x1="546.5" y1="119.5" x2="561.7" y2="104" stroke="#000" stroke-width="1.1" />
<line x1="546.5" y1="119.5" x2="561.7" y2="111.1" stroke="#000" stroke-width="1.1" />
<line x1="546.5" y1="119.5" x2="561.7" y2="115.6" stroke="#000" stroke-width="1.1" />
<polygon points="546,120 552.5,116 552.5,118.6" fill="#000" stroke="none" stroke-width="0" />
<polyline points="569.1,105.2 575.1,118.2 580.3,109.7 584,113.7" fill="none" stroke="#000" stroke-width="1.1" />
<circle cx="599.5" cy="111.5" r="2.2" fill="none" stroke="#808080" stroke-width="0.9"/>
<circle cx="623.5" cy="111.5" r="2.2" fill="none" stroke="#808080" stroke-width="0.9"/>
<polygon points="616,102.5 613.5,106.5 618.5,106.5" fill="#000" stroke="none" stroke-width="0" />
<polygon points="632,119 628,116.5 628,121.5" fill="#000" stroke="none" stroke-width="0" />
<line x1="639.2" y1="109.7" x2="652.8" y2="104.5" stroke="#000" stroke-width="1.3" />
<line x1="639.2" y1="114.1" x2="652.8" y2="108.5" stroke="#000" stroke-width="1.3" />
<line x1="639.2" y1="118.2" x2="652.8" y2="112.2" stroke="#000" stroke-width="1.3" />
<polygon points="685,115.5 682,114 682,117" fill="#000" stroke="none" stroke-width="0" />
<polyline points="696.6,118.6 701.8,105.2 706.2,109.7 709.6,105.9" fill="none" stroke="#000" stroke-width="1" />
<text x="705.6" y="120" font-size="11" fill="#ff0000" font-weight="normal" font-family="Liberation Sans,Noto Sans CJK SC,sans-serif" text-anchor="middle" stroke="#ff0000" stroke-width=".35">%</text>
<g transform="translate(725,118.2) scale(.8,1)">
<text x="0" y="0" font-size="17.5" fill="#000" font-weight="normal" font-family="Liberation Sans,Noto Sans CJK SC,sans-serif" text-anchor="middle" >%</text>
</g>
<text x="744.4" y="118.4" font-size="11" fill="#ff0000" font-weight="normal" font-family="Liberation Sans,Noto Sans CJK SC,sans-serif" text-anchor="middle" stroke="#ff0000" stroke-width=".35">%</text>
<circle cx="771" cy="111.8" r="7.8" fill="#fafafa" stroke="#909090" stroke-width="1"/>
<text x="770.8" y="116.2" font-size="11" fill="#808000" font-weight="normal" font-family="Noto Sans CJK SC,Noto Sans CJK SC,sans-serif" text-anchor="middle" >金</text>
<text x="790.5" y="117.2" font-size="10" fill="#808000" font-weight="normal" font-family="Noto Sans CJK SC,Noto Sans CJK SC,sans-serif" text-anchor="middle" >金</text>
<g transform="translate(812.3,104.5) scale(0.85)">
<polygon points="9.3,2.5 11.1,0 13,0.2 13.4,1.7 15,1.1 15,7.3" fill="#ff0000" stroke="none" stroke-width="0" />
<polygon points="9.3,2.8 14.8,7.3 14.5,10.6 8.2,12.5 5,10.2 5.9,6.9" fill="#989898" stroke="none" stroke-width="0" />
<polygon points="9.6,4.5 8,8.5 9.5,10.5 11.2,6.5" fill="#e4e4e4" stroke="none" stroke-width="0" />
<line x1="10.9" y1="0.2" x2="5.5" y2="6.9" stroke="#000" stroke-width="1.4" />
<line x1="5.5" y1="6.9" x2="4.8" y2="10.5" stroke="#000" stroke-width="1.4" />
<line x1="9.3" y1="2.6" x2="15" y2="7.3" stroke="#000" stroke-width="1.4" />
<line x1="14.8" y1="10.2" x2="8.2" y2="12.8" stroke="#000" stroke-width="1.4" />
<line x1="8.2" y1="12.8" x2="3.7" y2="14.3" stroke="#000" stroke-width="1.4" />
<polygon points="5,11 7.8,12.5 6.3,13.6 3.9,14.3" fill="#ff0000" stroke="none" stroke-width="0" />
</g>
<path d="M832.4,117 Q835,114 836.3,108.5 Q837.2,105.5 838.3,107.5 Q840,111.5 841,116 Q841.8,118.8 843,117 Q845.5,112 847.6,105.8" fill="none" stroke="#808080" stroke-width="1" />
<text x="863" y="116" font-size="10.5" fill="#808000" font-weight="normal" font-family="Noto Sans CJK SC,Noto Sans CJK SC,sans-serif" text-anchor="middle" >金</text>
<line x1="878.5" y1="119.5" x2="893.5" y2="104.5" stroke="#000" stroke-width="1.1" />
<text x="882.8" y="113" font-size="10.8" fill="#ff0000" font-weight="normal" font-family="Liberation Sans,Noto Sans CJK SC,sans-serif" text-anchor="middle" stroke="#ff0000" stroke-width=".3">J</text>
<line x1="901.5" y1="119.5" x2="916.5" y2="104.5" stroke="#000" stroke-width="1.1" />
<text x="905.8" y="113" font-size="11.8" fill="#ff0000" font-weight="bold" font-family="Liberation Sans,Noto Sans CJK SC,sans-serif" text-anchor="middle" stroke="#ff0000" stroke-width=".3">F</text>
<line x1="924.5" y1="119.5" x2="939.5" y2="104.5" stroke="#000" stroke-width="1.1" />
<text x="928.8" y="113" font-size="10.8" fill="#808000" font-weight="normal" font-family="Noto Sans CJK SC,Noto Sans CJK SC,sans-serif" text-anchor="middle" stroke="#808000" stroke-width=".3">金</text>
<line x1="947.5" y1="119.5" x2="962.5" y2="104.5" stroke="#000" stroke-width="1.1" />
<text x="951.8" y="113" font-size="10.8" fill="#ff0000" font-weight="normal" font-family="Noto Sans CJK SC,Noto Sans CJK SC,sans-serif" text-anchor="middle" stroke="#ff0000" stroke-width=".3">神</text>
<line x1="970.5" y1="119.5" x2="985.5" y2="104.5" stroke="#000" stroke-width="1.1" />
<text x="974.8" y="113" font-size="10.8" fill="#ff0000" font-weight="normal" font-family="Noto Sans CJK SC,Noto Sans CJK SC,sans-serif" text-anchor="middle" stroke="#ff0000" stroke-width=".3">赢</text>
<line x1="993.5" y1="119.5" x2="1008.5" y2="104.5" stroke="#000" stroke-width="1.1" />
<text x="997.8" y="113" font-size="10.8" fill="#ff0000" font-weight="normal" font-family="Noto Sans CJK SC,Noto Sans CJK SC,sans-serif" text-anchor="middle" stroke="#ff0000" stroke-width=".3">四</text></g></svg>
<!-- chart -->
<div class="abs" style="left:1236px;top:124px;width:2px;height:553px;background:#858585"></div><div class="abs" style="left:1238px;top:218px;width:1px;height:1px;background:#000"></div>
<div class="abs" style="left:66px;top:137px;width:1170px;height:1px;background:#909090"></div>
<div class="abs" style="left:0;top:600px;width:1236px;height:2px;background:#808080"></div>
<span class="dt" style="left:67px">09-15</span><span class="dt" style="left:126px">09-29</span><span class="dt" style="left:196px">10-20</span><span class="dt" style="left:266px">11-03</span><span class="dt" style="left:336px">11-17</span><span class="dt" style="left:406px">12-01</span><span class="dt" style="left:476px">12-15</span><span class="dt" style="left:546px">12-29</span><span class="dt" style="left:616px">01-14</span><span class="dt" style="left:686px">01-28</span><span class="dt" style="left:756px">02-11</span><span class="dt" style="left:826px">03-04</span><span class="dt" style="left:896px">03-18</span><span class="dt" style="left:966px">04-01</span><span class="dt" style="left:1036px">04-16</span><span class="dt" style="left:1106px">04-30</span><span class="dt" style="left:1176px">05-14</span>
<span class="abs cj gs" style="left:-1.5px;top:130px;font-size:12px;line-height:14px;color:#0000ff">日<span class="mono" style="font-size:12px">K</span>线</span>
<span class="abs cj gs" style="left:67px;top:138px;font-size:12px;line-height:14px;color:#000">乾坤<span class="mono" style="font-size:12px">K</span>线</span>
<div class="abs" style="left:73px;top:152px;width:0;height:0;border-left:4px solid transparent;border-right:4px solid transparent;border-top:4px solid #000"></div>
<span class="abs" style="left:135px;top:139px;font-size:12px;line-height:14px;color:#ff0000;white-space:nowrap"><span class="cj">关注线</span><span style="font-size:11px">=2455.9</span></span>
<span class="abs" style="left:214px;top:139px;font-size:12px;line-height:14px;color:#008080;white-space:nowrap"><span class="cj">出局线</span><span style="font-size:11px">=2565.3</span></span>
<span class="abs mono gs" style="left:1136px;top:138px;font-size:13px;line-height:14px;color:#0000ff;white-space:pre;transform:scaleX(.835);transform-origin:0 0">1A0001</span><span class="abs cj gs" style="left:1185px;top:137.5px;font-size:12.5px;line-height:14px;color:#0000ff;white-space:pre">上证指数</span>
<span class="abs" style="left:264.5px;top:494.5px;font-size:11px;line-height:14px;color:#0000ff;letter-spacing:.75px">2279.8401</span>
<span class="abs" style="left:1041.5px;top:174.5px;font-size:11px;line-height:14px;color:#0000ff;letter-spacing:.75px">4040.3501</span>
<span class="ylab" style="top:521.2px">2154.3219</span>
<span class="ylab" style="top:543.2px">578998801</span>
<span class="ylab" style="top:560.7px">385999201</span>
<span class="ylab" style="top:577.2px">192999600</span>
<span class="ylab" style="top:615.2px;text-align:right">112.50</span>
<span class="ylab" style="top:630.2px;text-align:right"> 84.37</span>
<span class="ylab" style="top:645.2px;text-align:right"> 56.25</span>
<span class="ylab" style="top:660.2px;text-align:right"> 28.12</span>
<span class="abs cj gs" style="left:-1px;top:602px;font-size:12.4px;line-height:14px;color:#0000ff">能量买卖</span>
<span class="sell" style="left:76.5px">卖</span><span class="sell" style="left:125.5px">卖</span><span class="sell" style="left:174.5px">卖</span><span class="sell" style="left:349.5px">卖</span><span class="sell" style="left:461.5px">卖</span><span class="sell" style="left:531.5px">卖</span><span class="sell" style="left:601.5px">卖</span><span class="sell" style="left:853.5px">卖</span><span class="sell" style="left:944.5px">卖</span><span class="sell" style="left:972.5px">卖</span><span class="sell" style="left:1014.5px">卖</span><span class="sell" style="left:1084.5px">卖</span>
<svg class="abs" style="left:0;top:0" width="1239" height="677" viewBox="0 0 1239 677" shape-rendering="crispEdges">
<line x1="66" y1="532.5" x2="1234" y2="532.5" stroke="#a0a0a0" stroke-dasharray="3 3"/>
<line x1="66" y1="549.5" x2="1234" y2="549.5" stroke="#a0a0a0" stroke-dasharray="3 3"/>
<line x1="66" y1="566.5" x2="1234" y2="566.5" stroke="#a0a0a0" stroke-dasharray="3 3"/>
<line x1="66" y1="583.5" x2="1234" y2="583.5" stroke="#a0a0a0" stroke-dasharray="3 3"/>
<line x1="66" y1="621.5" x2="1234" y2="621.5" stroke="#a0a0a0" stroke-dasharray="3 3"/>
<line x1="66" y1="636.5" x2="1234" y2="636.5" stroke="#a0a0a0" stroke-dasharray="3 3"/>
<line x1="66" y1="651.5" x2="1234" y2="651.5" stroke="#a0a0a0" stroke-dasharray="3 3"/>
<line x1="66" y1="666.5" x2="1234" y2="666.5" stroke="#a0a0a0" stroke-dasharray="3 3"/>
<line x1="1024" y1="172.5" x2="1234" y2="172.5" stroke="#808080" stroke-dasharray="6 2"/>
<rect x="69" y="496" width="1" height="4" fill="#ff0000"/>
<rect x="65" y="497" width="8" height="1" fill="#ff0000"/>
<line x1="69.5" y1="515.4" x2="76.5" y2="514.1" stroke="#ff0000" stroke-width="1"/>
<line x1="69.5" y1="500.0" x2="76.5" y2="500.3" stroke="#008080" stroke-width="1"/>
<rect x="76" y="495" width="1" height="10" fill="#ff0000"/>
<rect x="72" y="496" width="8" height="9" fill="#ff0000"/>
<line x1="76.5" y1="514.1" x2="83.5" y2="512.9" stroke="#ff0000" stroke-width="1"/>
<line x1="76.5" y1="500.3" x2="83.5" y2="500.5" stroke="#008080" stroke-width="1"/>
<rect x="83" y="502" width="1" height="5" fill="#ff0000"/>
<rect x="79" y="502" width="8" height="1" fill="#ff0000"/>
<line x1="83.5" y1="512.9" x2="90.5" y2="511.6" stroke="#ff0000" stroke-width="1"/>
<line x1="83.5" y1="500.5" x2="90.5" y2="501.6" stroke="#008080" stroke-width="1"/>
<rect x="90" y="500" width="1" height="4" fill="#ff0000"/>
<rect x="86" y="501" width="8" height="1" fill="#ff0000"/>
<line x1="90.5" y1="511.6" x2="97.5" y2="510.3" stroke="#ff0000" stroke-width="1"/>
<line x1="90.5" y1="501.6" x2="97.5" y2="500.6" stroke="#008080" stroke-width="1"/>
<rect x="97" y="498" width="1" height="4" fill="#ff0000"/>
<rect x="93" y="498" width="8" height="4" fill="#ff0000"/>
<line x1="97.5" y1="510.3" x2="104.5" y2="509.3" stroke="#ff0000" stroke-width="1"/>
<line x1="97.5" y1="500.6" x2="104.5" y2="501.3" stroke="#008080" stroke-width="1"/>
<rect x="104" y="500" width="1" height="7" fill="#ff0000"/>
<rect x="100" y="500" width="8" height="6" fill="#ff0000"/>
<line x1="104.5" y1="509.3" x2="111.5" y2="508.3" stroke="#ff0000" stroke-width="1"/>
<line x1="104.5" y1="501.3" x2="111.5" y2="502.3" stroke="#008080" stroke-width="1"/>
<rect x="111" y="502" width="1" height="4" fill="#ff0000"/>
<rect x="107" y="502" width="8" height="4" fill="#ff0000"/>
<line x1="111.5" y1="508.3" x2="118.5" y2="507.3" stroke="#ff0000" stroke-width="1"/>
<line x1="111.5" y1="502.3" x2="118.5" y2="502.5" stroke="#008080" stroke-width="1"/>
<rect x="118" y="495" width="1" height="9" fill="#ff0000"/>
<rect x="114" y="496" width="8" height="8" fill="#ff0000"/>
<line x1="118.5" y1="507.3" x2="125.5" y2="506.3" stroke="#ff0000" stroke-width="1"/>
<line x1="118.5" y1="502.5" x2="125.5" y2="500.6" stroke="#008080" stroke-width="1"/>
<rect x="125" y="492" width="1" height="4" fill="#ff0000"/>
<rect x="121" y="494" width="8" height="1" fill="#ff0000"/>
<line x1="125.5" y1="506.3" x2="132.5" y2="505.4" stroke="#ff0000" stroke-width="1"/>
<line x1="125.5" y1="500.6" x2="132.5" y2="499.0" stroke="#008080" stroke-width="1"/>
<rect x="132" y="494" width="1" height="4" fill="#ff0000"/>
<rect x="128" y="495" width="8" height="2" fill="#ff0000"/>
<line x1="132.5" y1="505.4" x2="139.5" y2="504.5" stroke="#ff0000" stroke-width="1"/>
<line x1="132.5" y1="499.0" x2="139.5" y2="498.0" stroke="#008080" stroke-width="1"/>
<rect x="139" y="492" width="1" height="3" fill="#ff0000"/>
<rect x="135" y="493" width="8" height="1" fill="#ff0000"/>
<line x1="139.5" y1="504.5" x2="146.5" y2="503.7" stroke="#ff0000" stroke-width="1"/>
<line x1="139.5" y1="498.0" x2="146.5" y2="497.0" stroke="#008080" stroke-width="1"/>
<rect x="146" y="492" width="1" height="2" fill="#ff0000"/>
<rect x="142" y="492" width="8" height="1" fill="#ff0000"/>
<line x1="146.5" y1="503.7" x2="153.5" y2="502.8" stroke="#ff0000" stroke-width="1"/>
<line x1="146.5" y1="497.0" x2="153.5" y2="494.1" stroke="#008080" stroke-width="1"/>
<rect x="153" y="488" width="1" height="6" fill="#ff0000"/>
<rect x="149" y="488" width="8" height="3" fill="#ff0000"/>
<line x1="153.5" y1="502.8" x2="160.5" y2="502.0" stroke="#ff0000" stroke-width="1"/>
<line x1="153.5" y1="494.1" x2="160.5" y2="492.0" stroke="#008080" stroke-width="1"/>
<rect x="160" y="487" width="1" height="4" fill="#ff0000"/>
<rect x="156" y="487" width="8" height="1" fill="#ff0000"/>
<line x1="160.5" y1="502.0" x2="167.5" y2="501.2" stroke="#ff0000" stroke-width="1"/>
<line x1="160.5" y1="492.0" x2="167.5" y2="491.0" stroke="#008080" stroke-width="1"/>
<rect x="167" y="488" width="1" height="3" fill="#ff0000"/>
<rect x="163" y="489" width="8" height="1" fill="#ff0000"/>
<line x1="167.5" y1="501.2" x2="174.5" y2="500.4" stroke="#ff0000" stroke-width="1"/>
<line x1="167.5" y1="491.0" x2="174.5" y2="491.1" stroke="#008080" stroke-width="1"/>
<rect x="174" y="491" width="1" height="5" fill="#ff0000"/>
<rect x="170" y="492" width="8" height="1" fill="#ff0000"/>
<line x1="174.5" y1="500.4" x2="181.5" y2="499.5" stroke="#ff0000" stroke-width="1"/>
<line x1="174.5" y1="491.1" x2="181.5" y2="491.2" stroke="#008080" stroke-width="1"/>
<rect x="181" y="489" width="1" height="6" fill="#ff0000"/>
<rect x="177" y="492" width="8" height="1" fill="#ff0000"/>
<line x1="181.5" y1="499.5" x2="188.5" y2="498.6" stroke="#ff0000" stroke-width="1"/>
<line x1="181.5" y1="491.2" x2="188.5" y2="491.1" stroke="#008080" stroke-width="1"/>
<rect x="188" y="490" width="1" height="6" fill="#ff0000"/>
<rect x="184" y="490" width="8" height="2" fill="#ff0000"/>
<line x1="188.5" y1="498.6" x2="195.5" y2="497.7" stroke="#ff0000" stroke-width="1"/>
<line x1="188.5" y1="491.1" x2="195.5" y2="490.7" stroke="#008080" stroke-width="1"/>
<rect x="195" y="487" width="1" height="7" fill="#ff0000"/>
<rect x="191" y="490" width="8" height="1" fill="#ff0000"/>
<line x1="195.5" y1="497.7" x2="202.5" y2="497.0" stroke="#ff0000" stroke-width="1"/>
<line x1="195.5" y1="490.7" x2="202.5" y2="491.2" stroke="#008080" stroke-width="1"/>
<rect x="202" y="492" width="1" height="10" fill="#800080"/>
<rect x="198" y="494" width="8" height="1" fill="#800080"/>
<line x1="202.5" y1="497.0" x2="209.5" y2="496.3" stroke="#ff0000" stroke-width="1"/>
<line x1="202.5" y1="491.2" x2="209.5" y2="492.2" stroke="#008080" stroke-width="1"/>
<rect x="209" y="493" width="1" height="2" fill="#ff0000"/>
<rect x="205" y="493" width="8" height="2" fill="#ff0000"/>
<line x1="209.5" y1="496.3" x2="216.5" y2="495.8" stroke="#ff0000" stroke-width="1"/>
<line x1="209.5" y1="492.2" x2="216.5" y2="493.3" stroke="#008080" stroke-width="1"/>
<rect x="216" y="492" width="1" height="4" fill="#800080"/>
<rect x="212" y="494" width="8" height="2" fill="#800080"/>
<line x1="216.5" y1="495.8" x2="223.5" y2="495.6" stroke="#ff0000" stroke-width="1"/>
<line x1="216.5" y1="493.3" x2="223.5" y2="494.7" stroke="#008080" stroke-width="1"/>
<rect x="223" y="496" width="1" height="3" fill="#800080"/>
<rect x="219" y="497" width="8" height="2" fill="#800080"/>
<line x1="223.5" y1="495.6" x2="230.5" y2="495.5" stroke="#ff0000" stroke-width="1"/>
<line x1="223.5" y1="494.7" x2="230.5" y2="496.6" stroke="#008080" stroke-width="1"/>
<rect x="230" y="498" width="1" height="7" fill="#0000ff"/>
<rect x="226" y="500" width="8" height="4" fill="#0000ff"/>
<line x1="230.5" y1="495.5" x2="237.5" y2="495.4" stroke="#ff0000" stroke-width="1"/>
<line x1="230.5" y1="496.6" x2="237.5" y2="498.7" stroke="#008080" stroke-width="1"/>
<rect x="237" y="501" width="1" height="4" fill="#0000ff"/>
<rect x="233" y="502" width="8" height="1" fill="#0000ff"/>
<line x1="237.5" y1="495.4" x2="244.5" y2="495.4" stroke="#ff0000" stroke-width="1"/>
<line x1="237.5" y1="498.7" x2="244.5" y2="500.5" stroke="#008080" stroke-width="1"/>
<rect x="244" y="505" width="1" height="4" fill="#0000ff"/>
<rect x="240" y="504" width="8" height="1" fill="#0000ff"/>
<line x1="244.5" y1="495.4" x2="251.5" y2="495.3" stroke="#ff0000" stroke-width="1"/>
<line x1="244.5" y1="500.5" x2="251.5" y2="500.0" stroke="#008080" stroke-width="1"/>
<rect x="251" y="497" width="1" height="8" fill="#0000ff"/>
<rect x="247" y="497" width="8" height="8" fill="#0000ff"/>
<line x1="251.5" y1="495.3" x2="258.5" y2="495.3" stroke="#ff0000" stroke-width="1"/>
<line x1="251.5" y1="500.0" x2="258.5" y2="499.5" stroke="#008080" stroke-width="1"/>
<rect x="258" y="488" width="1" height="8" fill="#800080"/>
<rect x="254" y="490" width="8" height="6" fill="#800080"/>
<line x1="258.5" y1="495.3" x2="265.5" y2="495.3" stroke="#ff0000" stroke-width="1"/>
<line x1="258.5" y1="499.5" x2="265.5" y2="497.5" stroke="#008080" stroke-width="1"/>
<rect x="265" y="485" width="1" height="6" fill="#ff0000"/>
<rect x="261" y="487" width="8" height="3" fill="#ff0000"/>
<line x1="265.5" y1="495.3" x2="272.5" y2="495.2" stroke="#ff0000" stroke-width="1"/>
<line x1="265.5" y1="497.5" x2="272.5" y2="495.0" stroke="#008080" stroke-width="1"/>
<rect x="272" y="480" width="1" height="8" fill="#ff0000"/>
<rect x="268" y="481" width="8" height="5" fill="#ff0000"/>
<line x1="272.5" y1="495.2" x2="279.5" y2="495.0" stroke="#ff0000" stroke-width="1"/>
<line x1="272.5" y1="495.0" x2="279.5" y2="491.7" stroke="#008080" stroke-width="1"/>
<rect x="279" y="478" width="1" height="3" fill="#ff0000"/>
<rect x="275" y="479" width="8" height="1" fill="#ff0000"/>
<line x1="279.5" y1="495.0" x2="286.5" y2="494.8" stroke="#ff0000" stroke-width="1"/>
<line x1="279.5" y1="491.7" x2="286.5" y2="488.3" stroke="#008080" stroke-width="1"/>
<rect x="286" y="478" width="1" height="4" fill="#ff0000"/>
<rect x="282" y="479" width="8" height="1" fill="#ff0000"/>
<line x1="286.5" y1="494.8" x2="293.5" y2="494.6" stroke="#ff0000" stroke-width="1"/>
<line x1="286.5" y1="488.3" x2="293.5" y2="485.0" stroke="#008080" stroke-width="1"/>
<rect x="293" y="478" width="1" height="4" fill="#ff0000"/>
<rect x="289" y="480" width="8" height="1" fill="#ff0000"/>
<line x1="293.5" y1="494.6" x2="300.5" y2="494.2" stroke="#ff0000" stroke-width="1"/>
<line x1="293.5" y1="485.0" x2="300.5" y2="481.8" stroke="#008080" stroke-width="1"/>
<rect x="300" y="480" width="1" height="5" fill="#ff0000"/>
<rect x="296" y="480" width="8" height="1" fill="#ff0000"/>
<line x1="300.5" y1="494.2" x2="307.5" y2="493.9" stroke="#ff0000" stroke-width="1"/>
<line x1="300.5" y1="481.8" x2="307.5" y2="480.3" stroke="#008080" stroke-width="1"/>
<rect x="307" y="474" width="1" height="9" fill="#ff0000"/>
<rect x="303" y="480" width="8" height="1" fill="#ff0000"/>
<line x1="307.5" y1="493.9" x2="314.5" y2="493.2" stroke="#ff0000" stroke-width="1"/>
<line x1="307.5" y1="480.3" x2="314.5" y2="478.6" stroke="#008080" stroke-width="1"/>
<rect x="314" y="471" width="1" height="8" fill="#ff0000"/>
<rect x="310" y="471" width="8" height="7" fill="#ff0000"/>
<line x1="314.5" y1="493.2" x2="321.5" y2="492.0" stroke="#ff0000" stroke-width="1"/>
<line x1="314.5" y1="478.6" x2="321.5" y2="477.0" stroke="#008080" stroke-width="1"/>
<rect x="321" y="464" width="1" height="12" fill="#ff0000"/>
<rect x="317" y="469" width="8" height="3" fill="#ff0000"/>
<line x1="321.5" y1="492.0" x2="328.5" y2="490.8" stroke="#ff0000" stroke-width="1"/>
<line x1="321.5" y1="477.0" x2="328.5" y2="475.4" stroke="#008080" stroke-width="1"/>
<rect x="328" y="468" width="1" height="8" fill="#ff0000"/>
<rect x="324" y="468" width="8" height="6" fill="#ff0000"/>
<line x1="328.5" y1="490.8" x2="335.5" y2="489.8" stroke="#ff0000" stroke-width="1"/>
<line x1="328.5" y1="475.4" x2="335.5" y2="473.8" stroke="#008080" stroke-width="1"/>
<rect x="335" y="464" width="1" height="7" fill="#ff0000"/>
<rect x="331" y="467" width="8" height="1" fill="#ff0000"/>
<line x1="335.5" y1="489.8" x2="342.5" y2="488.8" stroke="#ff0000" stroke-width="1"/>
<line x1="335.5" y1="473.8" x2="342.5" y2="472.2" stroke="#008080" stroke-width="1"/>
<rect x="342" y="469" width="1" height="4" fill="#ff0000"/>
<rect x="338" y="470" width="8" height="1" fill="#ff0000"/>
<line x1="342.5" y1="488.8" x2="349.5" y2="487.8" stroke="#ff0000" stroke-width="1"/>
<line x1="342.5" y1="472.2" x2="349.5" y2="470.8" stroke="#008080" stroke-width="1"/>
<rect x="349" y="464" width="1" height="7" fill="#ff0000"/>
<rect x="345" y="464" width="8" height="7" fill="#ff0000"/>
<line x1="349.5" y1="487.8" x2="356.5" y2="486.8" stroke="#ff0000" stroke-width="1"/>
<line x1="349.5" y1="470.8" x2="356.5" y2="470.9" stroke="#008080" stroke-width="1"/>
<rect x="356" y="471" width="1" height="4" fill="#ff0000"/>
<rect x="352" y="471" width="8" height="3" fill="#ff0000"/>
<line x1="356.5" y1="486.8" x2="363.5" y2="485.5" stroke="#ff0000" stroke-width="1"/>
<line x1="356.5" y1="470.9" x2="363.5" y2="471.1" stroke="#008080" stroke-width="1"/>
<rect x="363" y="473" width="1" height="3" fill="#ff0000"/>
<rect x="360" y="475" width="6" height="1" fill="#008000"/>
<line x1="363.5" y1="485.5" x2="370.5" y2="484.1" stroke="#ff0000" stroke-width="1"/>
<line x1="363.5" y1="471.1" x2="370.5" y2="471.3" stroke="#008080" stroke-width="1"/>
<rect x="370" y="475" width="1" height="3" fill="#ff0000"/>
<rect x="366" y="475" width="8" height="2" fill="#ff0000"/>
<line x1="370.5" y1="484.1" x2="377.5" y2="482.6" stroke="#ff0000" stroke-width="1"/>
<line x1="370.5" y1="471.3" x2="377.5" y2="471.2" stroke="#008080" stroke-width="1"/>
<rect x="377" y="468" width="1" height="8" fill="#ff0000"/>
<rect x="373" y="468" width="8" height="6" fill="#ff0000"/>
<line x1="377.5" y1="482.6" x2="384.5" y2="481.2" stroke="#ff0000" stroke-width="1"/>
<line x1="377.5" y1="471.2" x2="384.5" y2="469.9" stroke="#008080" stroke-width="1"/>
<rect x="384" y="457" width="1" height="9" fill="#ff0000"/>
<rect x="380" y="460" width="8" height="5" fill="#ff0000"/>
<line x1="384.5" y1="481.2" x2="391.5" y2="479.7" stroke="#ff0000" stroke-width="1"/>
<line x1="384.5" y1="469.9" x2="391.5" y2="467.4" stroke="#008080" stroke-width="1"/>
<rect x="391" y="453" width="1" height="8" fill="#ff0000"/>
<rect x="387" y="453" width="8" height="7" fill="#ff0000"/>
<line x1="391.5" y1="479.7" x2="398.5" y2="477.7" stroke="#ff0000" stroke-width="1"/>
<line x1="391.5" y1="467.4" x2="398.5" y2="463.9" stroke="#008080" stroke-width="1"/>
<rect x="398" y="446" width="1" height="6" fill="#ff0000"/>
<rect x="394" y="446" width="8" height="6" fill="#ff0000"/>
<line x1="398.5" y1="477.7" x2="405.5" y2="475.6" stroke="#ff0000" stroke-width="1"/>
<line x1="398.5" y1="463.9" x2="405.5" y2="459.9" stroke="#008080" stroke-width="1"/>
<rect x="405" y="441" width="1" height="6" fill="#ff0000"/>
<rect x="401" y="441" width="8" height="3" fill="#ff0000"/>
<line x1="405.5" y1="475.6" x2="412.5" y2="473.6" stroke="#ff0000" stroke-width="1"/>
<line x1="405.5" y1="459.9" x2="412.5" y2="453.5" stroke="#008080" stroke-width="1"/>
<rect x="412" y="431" width="1" height="11" fill="#ff0000"/>
<rect x="408" y="431" width="8" height="10" fill="#ff0000"/>
<line x1="412.5" y1="473.6" x2="419.5" y2="471.6" stroke="#ff0000" stroke-width="1"/>
<line x1="412.5" y1="453.5" x2="419.5" y2="447.4" stroke="#008080" stroke-width="1"/>
<rect x="419" y="423" width="1" height="10" fill="#ff0000"/>
<rect x="415" y="429" width="8" height="1" fill="#ff0000"/>
<line x1="419.5" y1="471.6" x2="426.5" y2="469.6" stroke="#ff0000" stroke-width="1"/>
<line x1="419.5" y1="447.4" x2="426.5" y2="441.2" stroke="#008080" stroke-width="1"/>
<rect x="426" y="413" width="1" height="21" fill="#ff0000"/>
<rect x="422" y="415" width="8" height="19" fill="#ff0000"/>
<line x1="426.5" y1="469.6" x2="433.5" y2="467.4" stroke="#ff0000" stroke-width="1"/>
<line x1="426.5" y1="441.2" x2="433.5" y2="433.0" stroke="#008080" stroke-width="1"/>
<rect x="433" y="404" width="1" height="17" fill="#ff0000"/>
<rect x="429" y="412" width="8" height="1" fill="#ff0000"/>
<line x1="433.5" y1="467.4" x2="440.5" y2="464.1" stroke="#ff0000" stroke-width="1"/>
<line x1="433.5" y1="433.0" x2="440.5" y2="423.4" stroke="#008080" stroke-width="1"/>
<rect x="440" y="389" width="1" height="25" fill="#ff0000"/>
<rect x="436" y="389" width="8" height="22" fill="#ff0000"/>
<line x1="440.5" y1="464.1" x2="447.5" y2="460.8" stroke="#ff0000" stroke-width="1"/>
<line x1="440.5" y1="423.4" x2="447.5" y2="414.0" stroke="#008080" stroke-width="1"/>
<rect x="447" y="374" width="1" height="32" fill="#ff0000"/>
<rect x="443" y="382" width="8" height="1" fill="#ff0000"/>
<line x1="447.5" y1="460.8" x2="454.5" y2="457.5" stroke="#ff0000" stroke-width="1"/>
<line x1="447.5" y1="414.0" x2="454.5" y2="404.6" stroke="#008080" stroke-width="1"/>
<rect x="454" y="362" width="1" height="31" fill="#ff0000"/>
<rect x="450" y="366" width="8" height="22" fill="#ff0000"/>
<line x1="454.5" y1="457.5" x2="461.5" y2="453.9" stroke="#ff0000" stroke-width="1"/>
<line x1="454.5" y1="404.6" x2="461.5" y2="397.9" stroke="#008080" stroke-width="1"/>
<rect x="461" y="352" width="1" height="49" fill="#ff0000"/>
<rect x="457" y="371" width="8" height="26" fill="#ff0000"/>
<line x1="461.5" y1="453.9" x2="468.5" y2="449.9" stroke="#ff0000" stroke-width="1"/>
<line x1="461.5" y1="397.9" x2="468.5" y2="391.6" stroke="#008080" stroke-width="1"/>
<rect x="468" y="381" width="1" height="26" fill="#ff0000"/>
<rect x="464" y="381" width="8" height="17" fill="#ff0000"/>
<line x1="468.5" y1="449.9" x2="475.5" y2="445.2" stroke="#ff0000" stroke-width="1"/>
<line x1="468.5" y1="391.6" x2="475.5" y2="387.1" stroke="#008080" stroke-width="1"/>
<rect x="475" y="376" width="1" height="13" fill="#ff0000"/>
<rect x="471" y="384" width="8" height="1" fill="#ff0000"/>
<line x1="475.5" y1="445.2" x2="482.5" y2="440.2" stroke="#ff0000" stroke-width="1"/>
<line x1="475.5" y1="387.1" x2="482.5" y2="382.9" stroke="#008080" stroke-width="1"/>
<rect x="482" y="377" width="1" height="9" fill="#ff0000"/>
<rect x="478" y="382" width="8" height="1" fill="#ff0000"/>
<line x1="482.5" y1="440.2" x2="489.5" y2="435.3" stroke="#ff0000" stroke-width="1"/>
<line x1="482.5" y1="382.9" x2="489.5" y2="380.7" stroke="#008080" stroke-width="1"/>
<rect x="489" y="379" width="1" height="12" fill="#ff0000"/>
<rect x="485" y="379" width="8" height="6" fill="#ff0000"/>
<line x1="489.5" y1="435.3" x2="496.5" y2="430.3" stroke="#ff0000" stroke-width="1"/>
<line x1="489.5" y1="380.7" x2="496.5" y2="378.9" stroke="#008080" stroke-width="1"/>
<rect x="496" y="366" width="1" height="14" fill="#ff0000"/>
<rect x="492" y="366" width="8" height="13" fill="#ff0000"/>
<line x1="496.5" y1="430.3" x2="503.5" y2="425.3" stroke="#ff0000" stroke-width="1"/>
<line x1="496.5" y1="378.9" x2="503.5" y2="377.6" stroke="#008080" stroke-width="1"/>
<rect x="503" y="355" width="1" height="16" fill="#ff0000"/>
<rect x="499" y="358" width="8" height="6" fill="#ff0000"/>
<line x1="503.5" y1="425.3" x2="510.5" y2="420.4" stroke="#ff0000" stroke-width="1"/>
<line x1="503.5" y1="377.6" x2="510.5" y2="372.3" stroke="#008080" stroke-width="1"/>
<rect x="510" y="353" width="1" height="11" fill="#ff0000"/>
<rect x="506" y="358" width="8" height="1" fill="#ff0000"/>
<line x1="510.5" y1="420.4" x2="517.5" y2="415.1" stroke="#ff0000" stroke-width="1"/>
<line x1="510.5" y1="372.3" x2="517.5" y2="367.3" stroke="#008080" stroke-width="1"/>
<rect x="517" y="347" width="1" height="19" fill="#ff0000"/>
<rect x="513" y="349" width="8" height="11" fill="#ff0000"/>
<line x1="517.5" y1="415.1" x2="524.5" y2="409.9" stroke="#ff0000" stroke-width="1"/>
<line x1="517.5" y1="367.3" x2="524.5" y2="362.8" stroke="#008080" stroke-width="1"/>
<rect x="524" y="334" width="1" height="19" fill="#ff0000"/>
<rect x="521" y="345" width="6" height="1" fill="#008000"/>
<line x1="524.5" y1="409.9" x2="531.5" y2="404.6" stroke="#ff0000" stroke-width="1"/>
<line x1="524.5" y1="362.8" x2="531.5" y2="360.3" stroke="#008080" stroke-width="1"/>
<rect x="531" y="344" width="1" height="21" fill="#ff0000"/>
<rect x="527" y="354" width="8" height="10" fill="#ff0000"/>
<line x1="531.5" y1="404.6" x2="538.5" y2="399.4" stroke="#ff0000" stroke-width="1"/>
<line x1="531.5" y1="360.3" x2="538.5" y2="359.8" stroke="#008080" stroke-width="1"/>
<rect x="538" y="362" width="1" height="20" fill="#ff0000"/>
<rect x="534" y="362" width="8" height="13" fill="#ff0000"/>
<line x1="538.5" y1="399.4" x2="545.5" y2="394.4" stroke="#ff0000" stroke-width="1"/>
<line x1="538.5" y1="359.8" x2="545.5" y2="357.8" stroke="#008080" stroke-width="1"/>
<rect x="545" y="356" width="1" height="20" fill="#ff0000"/>
<rect x="541" y="356" width="8" height="14" fill="#ff0000"/>
<line x1="545.5" y1="394.4" x2="552.5" y2="390.3" stroke="#ff0000" stroke-width="1"/>
<line x1="545.5" y1="357.8" x2="552.5" y2="355.1" stroke="#008080" stroke-width="1"/>
<rect x="552" y="338" width="1" height="20" fill="#ff0000"/>
<rect x="548" y="340" width="8" height="14" fill="#ff0000"/>
<line x1="552.5" y1="390.3" x2="559.5" y2="386.2" stroke="#ff0000" stroke-width="1"/>
<line x1="552.5" y1="355.1" x2="559.5" y2="352.6" stroke="#008080" stroke-width="1"/>
<rect x="559" y="327" width="1" height="19" fill="#ff0000"/>
<rect x="555" y="329" width="8" height="9" fill="#ff0000"/>
<line x1="559.5" y1="386.2" x2="566.5" y2="382.0" stroke="#ff0000" stroke-width="1"/>
<line x1="559.5" y1="352.6" x2="566.5" y2="350.9" stroke="#008080" stroke-width="1"/>
<rect x="566" y="333" width="1" height="12" fill="#ff0000"/>
<rect x="562" y="338" width="8" height="1" fill="#ff0000"/>
<line x1="566.5" y1="382.0" x2="573.5" y2="377.9" stroke="#ff0000" stroke-width="1"/>
<line x1="566.5" y1="350.9" x2="573.5" y2="347.6" stroke="#008080" stroke-width="1"/>
<rect x="573" y="324" width="1" height="16" fill="#ff0000"/>
<rect x="569" y="325" width="8" height="12" fill="#ff0000"/>
<line x1="573.5" y1="377.9" x2="580.5" y2="373.7" stroke="#ff0000" stroke-width="1"/>
<line x1="573.5" y1="347.6" x2="580.5" y2="338.6" stroke="#008080" stroke-width="1"/>
<rect x="580" y="299" width="1" height="22" fill="#ff0000"/>
<rect x="576" y="303" width="8" height="17" fill="#ff0000"/>
<line x1="580.5" y1="373.7" x2="587.5" y2="369.4" stroke="#ff0000" stroke-width="1"/>
<line x1="580.5" y1="338.6" x2="587.5" y2="328.8" stroke="#008080" stroke-width="1"/>
<rect x="587" y="294" width="1" height="18" fill="#ff0000"/>
<rect x="583" y="303" width="8" height="4" fill="#ff0000"/>
<line x1="587.5" y1="369.4" x2="594.5" y2="365.2" stroke="#ff0000" stroke-width="1"/>
<line x1="587.5" y1="328.8" x2="594.5" y2="321.5" stroke="#008080" stroke-width="1"/>
<rect x="594" y="298" width="1" height="11" fill="#ff0000"/>
<rect x="590" y="298" width="8" height="9" fill="#ff0000"/>
<line x1="594.5" y1="365.2" x2="601.5" y2="360.9" stroke="#ff0000" stroke-width="1"/>
<line x1="594.5" y1="321.5" x2="601.5" y2="317.0" stroke="#008080" stroke-width="1"/>
<rect x="601" y="297" width="1" height="17" fill="#ff0000"/>
<rect x="597" y="299" width="8" height="15" fill="#ff0000"/>
<line x1="601.5" y1="360.9" x2="608.5" y2="357.0" stroke="#ff0000" stroke-width="1"/>
<line x1="601.5" y1="317.0" x2="608.5" y2="314.0" stroke="#008080" stroke-width="1"/>
<rect x="608" y="292" width="1" height="27" fill="#ff0000"/>
<rect x="604" y="315" width="8" height="2" fill="#ff0000"/>
<line x1="608.5" y1="357.0" x2="615.5" y2="353.4" stroke="#ff0000" stroke-width="1"/>
<line x1="608.5" y1="314.0" x2="615.5" y2="312.2" stroke="#008080" stroke-width="1"/>
<rect x="615" y="317" width="1" height="16" fill="#ff0000"/>
<rect x="611" y="320" width="8" height="6" fill="#ff0000"/>
<line x1="615.5" y1="353.4" x2="622.5" y2="349.7" stroke="#ff0000" stroke-width="1"/>
<line x1="615.5" y1="312.2" x2="622.5" y2="312.2" stroke="#008080" stroke-width="1"/>
<rect x="622" y="320" width="1" height="9" fill="#ff0000"/>
<rect x="618" y="325" width="8" height="2" fill="#ff0000"/>
<line x1="622.5" y1="349.7" x2="629.5" y2="346.1" stroke="#ff0000" stroke-width="1"/>
<line x1="622.5" y1="312.2" x2="629.5" y2="315.3" stroke="#008080" stroke-width="1"/>
<rect x="629" y="318" width="1" height="15" fill="#ff0000"/>
<rect x="625" y="323" width="8" height="4" fill="#ff0000"/>
<line x1="629.5" y1="346.1" x2="636.5" y2="342.4" stroke="#ff0000" stroke-width="1"/>
<line x1="629.5" y1="315.3" x2="636.5" y2="316.1" stroke="#008080" stroke-width="1"/>
<rect x="636" y="305" width="1" height="25" fill="#ff0000"/>
<rect x="632" y="305" width="8" height="22" fill="#ff0000"/>
<line x1="636.5" y1="342.4" x2="643.5" y2="338.9" stroke="#ff0000" stroke-width="1"/>
<line x1="636.5" y1="316.1" x2="643.5" y2="317.1" stroke="#008080" stroke-width="1"/>
<rect x="643" y="293" width="1" height="12" fill="#ff0000"/>
<rect x="639" y="298" width="8" height="6" fill="#ff0000"/>
<line x1="643.5" y1="338.9" x2="650.5" y2="336.1" stroke="#ff0000" stroke-width="1"/>
<line x1="643.5" y1="317.1" x2="650.5" y2="321.5" stroke="#008080" stroke-width="1"/>
<rect x="650" y="320" width="1" height="32" fill="#800080"/>
<rect x="646" y="334" width="8" height="14" fill="#800080"/>
<line x1="650.5" y1="336.1" x2="657.5" y2="333.3" stroke="#ff0000" stroke-width="1"/>
<line x1="650.5" y1="321.5" x2="657.5" y2="324.4" stroke="#008080" stroke-width="1"/>
<rect x="657" y="334" width="1" height="17" fill="#800080"/>
<rect x="653" y="337" width="8" height="11" fill="#800080"/>
<line x1="657.5" y1="333.3" x2="664.5" y2="330.9" stroke="#ff0000" stroke-width="1"/>
<line x1="657.5" y1="324.4" x2="664.5" y2="321.3" stroke="#008080" stroke-width="1"/>
<rect x="664" y="305" width="1" height="31" fill="#800080"/>
<rect x="660" y="308" width="8" height="26" fill="#800080"/>
<line x1="664.5" y1="330.9" x2="671.5" y2="328.6" stroke="#ff0000" stroke-width="1"/>
<line x1="664.5" y1="321.3" x2="671.5" y2="318.2" stroke="#008080" stroke-width="1"/>
<rect x="671" y="302" width="1" height="12" fill="#ff0000"/>
<rect x="667" y="304" width="8" height="3" fill="#ff0000"/>
<line x1="671.5" y1="328.6" x2="678.5" y2="326.3" stroke="#ff0000" stroke-width="1"/>
<line x1="671.5" y1="318.2" x2="678.5" y2="315.0" stroke="#008080" stroke-width="1"/>
<rect x="678" y="292" width="1" height="15" fill="#ff0000"/>
<rect x="674" y="301" width="8" height="1" fill="#ff0000"/>
<line x1="678.5" y1="326.3" x2="685.5" y2="324.3" stroke="#ff0000" stroke-width="1"/>
<line x1="678.5" y1="315.0" x2="685.5" y2="314.3" stroke="#008080" stroke-width="1"/>
<rect x="685" y="296" width="1" height="12" fill="#ff0000"/>
<rect x="681" y="296" width="8" height="7" fill="#ff0000"/>
<line x1="685.5" y1="324.3" x2="692.5" y2="322.2" stroke="#ff0000" stroke-width="1"/>
<line x1="685.5" y1="314.3" x2="692.5" y2="313.8" stroke="#008080" stroke-width="1"/>
<rect x="692" y="295" width="1" height="19" fill="#ff0000"/>
<rect x="688" y="295" width="8" height="7" fill="#ff0000"/>
<line x1="692.5" y1="322.2" x2="699.5" y2="320.7" stroke="#ff0000" stroke-width="1"/>
<line x1="692.5" y1="313.8" x2="699.5" y2="309.4" stroke="#008080" stroke-width="1"/>
<rect x="699" y="302" width="1" height="11" fill="#ff0000"/>
<rect x="695" y="307" width="8" height="4" fill="#ff0000"/>
<line x1="699.5" y1="320.7" x2="706.5" y2="319.4" stroke="#ff0000" stroke-width="1"/>
<line x1="699.5" y1="309.4" x2="706.5" y2="306.3" stroke="#008080" stroke-width="1"/>
<rect x="706" y="315" width="1" height="10" fill="#800080"/>
<line x1="706.5" y1="319.4" x2="713.5" y2="318.9" stroke="#ff0000" stroke-width="1"/>
<line x1="706.5" y1="306.3" x2="713.5" y2="310.1" stroke="#008080" stroke-width="1"/>
<rect x="713" y="315" width="1" height="15" fill="#800080"/>
<rect x="709" y="317" width="8" height="13" fill="#800080"/>
<line x1="713.5" y1="318.9" x2="720.5" y2="318.6" stroke="#ff0000" stroke-width="1"/>
<line x1="713.5" y1="310.1" x2="720.5" y2="314.6" stroke="#008080" stroke-width="1"/>
<rect x="720" y="336" width="1" height="10" fill="#0000ff"/>
<rect x="716" y="342" width="8" height="2" fill="#0000ff"/>
<line x1="720.5" y1="318.6" x2="727.5" y2="318.4" stroke="#ff0000" stroke-width="1"/>
<line x1="720.5" y1="314.6" x2="727.5" y2="319.7" stroke="#008080" stroke-width="1"/>
<rect x="727" y="330" width="1" height="15" fill="#0000ff"/>
<rect x="723" y="331" width="8" height="8" fill="#0000ff"/>
<line x1="727.5" y1="318.4" x2="734.5" y2="318.4" stroke="#ff0000" stroke-width="1"/>
<line x1="727.5" y1="319.7" x2="734.5" y2="325.5" stroke="#008080" stroke-width="1"/>
<rect x="734" y="324" width="1" height="12" fill="#0000ff"/>
<rect x="730" y="329" width="8" height="7" fill="#0000ff"/>
<line x1="734.5" y1="318.4" x2="741.5" y2="318.4" stroke="#ff0000" stroke-width="1"/>
<line x1="734.5" y1="325.5" x2="741.5" y2="331.5" stroke="#008080" stroke-width="1"/>
<rect x="741" y="322" width="1" height="22" fill="#0000ff"/>
<rect x="737" y="322" width="8" height="22" fill="#0000ff"/>
<line x1="741.5" y1="318.4" x2="748.5" y2="318.4" stroke="#ff0000" stroke-width="1"/>
<line x1="741.5" y1="331.5" x2="748.5" y2="337.1" stroke="#008080" stroke-width="1"/>
<rect x="748" y="345" width="1" height="15" fill="#0000ff"/>
<rect x="744" y="347" width="8" height="7" fill="#0000ff"/>
<line x1="748.5" y1="318.4" x2="755.5" y2="319.2" stroke="#ff0000" stroke-width="1"/>
<line x1="748.5" y1="337.1" x2="755.5" y2="341.9" stroke="#008080" stroke-width="1"/>
<rect x="755" y="347" width="1" height="13" fill="#0000ff"/>
<rect x="751" y="352" width="8" height="6" fill="#0000ff"/>
<line x1="755.5" y1="319.2" x2="762.5" y2="320.0" stroke="#ff0000" stroke-width="1"/>
<line x1="755.5" y1="341.9" x2="762.5" y2="343.8" stroke="#008080" stroke-width="1"/>
<rect x="762" y="343" width="1" height="11" fill="#0000ff"/>
<rect x="758" y="343" width="8" height="10" fill="#0000ff"/>
<line x1="762.5" y1="320.0" x2="769.5" y2="321.2" stroke="#ff0000" stroke-width="1"/>
<line x1="762.5" y1="343.8" x2="769.5" y2="344.5" stroke="#008080" stroke-width="1"/>
<rect x="769" y="338" width="1" height="6" fill="#0000ff"/>
<rect x="765" y="340" width="8" height="2" fill="#0000ff"/>
<line x1="769.5" y1="321.2" x2="776.5" y2="322.6" stroke="#ff0000" stroke-width="1"/>
<line x1="769.5" y1="344.5" x2="776.5" y2="344.5" stroke="#008080" stroke-width="1"/>
<rect x="776" y="335" width="1" height="9" fill="#0000ff"/>
<rect x="772" y="337" width="8" height="3" fill="#0000ff"/>
<line x1="776.5" y1="322.6" x2="783.5" y2="324.0" stroke="#ff0000" stroke-width="1"/>
<line x1="776.5" y1="344.5" x2="783.5" y2="343.3" stroke="#008080" stroke-width="1"/>
<rect x="783" y="324" width="1" height="11" fill="#0000ff"/>
<rect x="779" y="331" width="8" height="3" fill="#0000ff"/>
<line x1="783.5" y1="324.0" x2="790.5" y2="325.3" stroke="#ff0000" stroke-width="1"/>
<line x1="783.5" y1="343.3" x2="790.5" y2="341.2" stroke="#008080" stroke-width="1"/>
<rect x="790" y="326" width="1" height="6" fill="#0000ff"/>
<rect x="786" y="327" width="8" height="3" fill="#0000ff"/>
<line x1="790.5" y1="325.3" x2="797.5" y2="326.6" stroke="#ff0000" stroke-width="1"/>
<line x1="790.5" y1="341.2" x2="797.5" y2="337.7" stroke="#008080" stroke-width="1"/>
<rect x="797" y="321" width="1" height="6" fill="#ff0000"/>
<rect x="793" y="323" width="8" height="3" fill="#ff0000"/>
<line x1="797.5" y1="326.6" x2="804.5" y2="327.8" stroke="#ff0000" stroke-width="1"/>
<line x1="797.5" y1="337.7" x2="804.5" y2="333.0" stroke="#008080" stroke-width="1"/>
<rect x="804" y="321" width="1" height="7" fill="#800080"/>
<rect x="800" y="321" width="8" height="4" fill="#800080"/>
<line x1="804.5" y1="327.8" x2="811.5" y2="329.0" stroke="#ff0000" stroke-width="1"/>
<line x1="804.5" y1="333.0" x2="811.5" y2="328.4" stroke="#008080" stroke-width="1"/>
<rect x="811" y="312" width="1" height="18" fill="#800080"/>
<rect x="807" y="313" width="8" height="14" fill="#800080"/>
<line x1="811.5" y1="329.0" x2="818.5" y2="329.9" stroke="#ff0000" stroke-width="1"/>
<line x1="811.5" y1="328.4" x2="818.5" y2="323.9" stroke="#008080" stroke-width="1"/>
<rect x="818" y="308" width="1" height="6" fill="#ff0000"/>
<rect x="814" y="310" width="8" height="3" fill="#ff0000"/>
<line x1="818.5" y1="329.9" x2="825.5" y2="330.8" stroke="#ff0000" stroke-width="1"/>
<line x1="818.5" y1="323.9" x2="825.5" y2="319.6" stroke="#008080" stroke-width="1"/>
<rect x="825" y="306" width="1" height="7" fill="#ff0000"/>
<rect x="821" y="305" width="8" height="1" fill="#ff0000"/>
<line x1="825.5" y1="330.8" x2="832.5" y2="331.2" stroke="#ff0000" stroke-width="1"/>
<line x1="825.5" y1="319.6" x2="832.5" y2="318.4" stroke="#008080" stroke-width="1"/>
<rect x="832" y="309" width="1" height="11" fill="#ff0000"/>
<rect x="828" y="309" width="8" height="10" fill="#ff0000"/>
<line x1="832.5" y1="331.2" x2="839.5" y2="331.7" stroke="#ff0000" stroke-width="1"/>
<line x1="832.5" y1="318.4" x2="839.5" y2="316.5" stroke="#008080" stroke-width="1"/>
<rect x="839" y="315" width="1" height="7" fill="#ff0000"/>
<rect x="835" y="316" width="8" height="3" fill="#ff0000"/>
<line x1="839.5" y1="331.7" x2="846.5" y2="331.8" stroke="#ff0000" stroke-width="1"/>
<line x1="839.5" y1="316.5" x2="846.5" y2="316.5" stroke="#008080" stroke-width="1"/>
<rect x="846" y="319" width="1" height="8" fill="#ff0000"/>
<rect x="842" y="319" width="8" height="3" fill="#ff0000"/>
<line x1="846.5" y1="331.8" x2="853.5" y2="330.7" stroke="#ff0000" stroke-width="1"/>
<line x1="846.5" y1="316.5" x2="853.5" y2="316.5" stroke="#008080" stroke-width="1"/>
<rect x="853" y="319" width="1" height="6" fill="#ff0000"/>
<rect x="849" y="322" width="8" height="2" fill="#ff0000"/>
<line x1="853.5" y1="330.7" x2="860.5" y2="329.7" stroke="#ff0000" stroke-width="1"/>
<line x1="853.5" y1="316.5" x2="860.5" y2="316.5" stroke="#008080" stroke-width="1"/>
<rect x="860" y="311" width="1" height="21" fill="#800080"/>
<rect x="856" y="312" width="8" height="15" fill="#800080"/>
<line x1="860.5" y1="329.7" x2="867.5" y2="328.5" stroke="#ff0000" stroke-width="1"/>
<line x1="860.5" y1="316.5" x2="867.5" y2="317.6" stroke="#008080" stroke-width="1"/>
<rect x="867" y="310" width="1" height="6" fill="#ff0000"/>
<rect x="863" y="314" width="8" height="1" fill="#ff0000"/>
<line x1="867.5" y1="328.5" x2="874.5" y2="327.1" stroke="#ff0000" stroke-width="1"/>
<line x1="867.5" y1="317.6" x2="874.5" y2="318.7" stroke="#008080" stroke-width="1"/>
<rect x="874" y="308" width="1" height="9" fill="#ff0000"/>
<rect x="870" y="314" width="8" height="1" fill="#ff0000"/>
<line x1="874.5" y1="327.1" x2="881.5" y2="325.7" stroke="#ff0000" stroke-width="1"/>
<line x1="874.5" y1="318.7" x2="881.5" y2="316.4" stroke="#008080" stroke-width="1"/>
<rect x="881" y="301" width="1" height="11" fill="#ff0000"/>
<rect x="877" y="303" width="8" height="7" fill="#ff0000"/>
<line x1="881.5" y1="325.7" x2="888.5" y2="324.2" stroke="#ff0000" stroke-width="1"/>
<line x1="881.5" y1="316.4" x2="888.5" y2="313.1" stroke="#008080" stroke-width="1"/>
<rect x="888" y="295" width="1" height="7" fill="#ff0000"/>
<rect x="884" y="298" width="8" height="3" fill="#ff0000"/>
<line x1="888.5" y1="324.2" x2="895.5" y2="322.6" stroke="#ff0000" stroke-width="1"/>
<line x1="888.5" y1="313.1" x2="895.5" y2="306.6" stroke="#008080" stroke-width="1"/>
<rect x="895" y="284" width="1" height="14" fill="#ff0000"/>
<rect x="891" y="284" width="8" height="11" fill="#ff0000"/>
<line x1="895.5" y1="322.6" x2="902.5" y2="320.9" stroke="#ff0000" stroke-width="1"/>
<line x1="895.5" y1="306.6" x2="902.5" y2="299.1" stroke="#008080" stroke-width="1"/>
<rect x="902" y="273" width="1" height="9" fill="#ff0000"/>
<rect x="898" y="274" width="8" height="6" fill="#ff0000"/>
<line x1="902.5" y1="320.9" x2="909.5" y2="319.3" stroke="#ff0000" stroke-width="1"/>
<line x1="902.5" y1="299.1" x2="909.5" y2="291.0" stroke="#008080" stroke-width="1"/>
<rect x="909" y="259" width="1" height="14" fill="#ff0000"/>
<rect x="905" y="259" width="8" height="13" fill="#ff0000"/>
<line x1="909.5" y1="319.3" x2="916.5" y2="316.6" stroke="#ff0000" stroke-width="1"/>
<line x1="909.5" y1="291.0" x2="916.5" y2="282.3" stroke="#008080" stroke-width="1"/>
<rect x="916" y="255" width="1" height="10" fill="#ff0000"/>
<rect x="912" y="258" width="8" height="1" fill="#ff0000"/>
<line x1="916.5" y1="316.6" x2="923.5" y2="313.8" stroke="#ff0000" stroke-width="1"/>
<line x1="916.5" y1="282.3" x2="923.5" y2="273.5" stroke="#008080" stroke-width="1"/>
<rect x="923" y="249" width="1" height="12" fill="#ff0000"/>
<rect x="919" y="252" width="8" height="5" fill="#ff0000"/>
<line x1="923.5" y1="313.8" x2="930.5" y2="311.0" stroke="#ff0000" stroke-width="1"/>
<line x1="923.5" y1="273.5" x2="930.5" y2="264.8" stroke="#008080" stroke-width="1"/>
<rect x="930" y="238" width="1" height="10" fill="#ff0000"/>
<rect x="926" y="238" width="8" height="9" fill="#ff0000"/>
<line x1="930.5" y1="311.0" x2="937.5" y2="307.9" stroke="#ff0000" stroke-width="1"/>
<line x1="930.5" y1="264.8" x2="937.5" y2="258.0" stroke="#008080" stroke-width="1"/>
<rect x="937" y="233" width="1" height="22" fill="#ff0000"/>
<rect x="934" y="237" width="6" height="1" fill="#008000"/>
<line x1="937.5" y1="307.9" x2="944.5" y2="304.6" stroke="#ff0000" stroke-width="1"/>
<line x1="937.5" y1="258.0" x2="944.5" y2="252.9" stroke="#008080" stroke-width="1"/>
<rect x="944" y="237" width="1" height="11" fill="#ff0000"/>
<rect x="940" y="239" width="8" height="4" fill="#ff0000"/>
<line x1="944.5" y1="304.6" x2="951.5" y2="300.0" stroke="#ff0000" stroke-width="1"/>
<line x1="944.5" y1="252.9" x2="951.5" y2="247.3" stroke="#008080" stroke-width="1"/>
<rect x="951" y="234" width="1" height="18" fill="#ff0000"/>
<rect x="947" y="239" width="8" height="7" fill="#ff0000"/>
<line x1="951.5" y1="300.0" x2="958.5" y2="295.3" stroke="#ff0000" stroke-width="1"/>
<line x1="951.5" y1="247.3" x2="958.5" y2="242.6" stroke="#008080" stroke-width="1"/>
<rect x="958" y="234" width="1" height="10" fill="#ff0000"/>
<rect x="954" y="237" width="8" height="1" fill="#ff0000"/>
<line x1="958.5" y1="295.3" x2="965.5" y2="290.5" stroke="#ff0000" stroke-width="1"/>
<line x1="958.5" y1="242.6" x2="965.5" y2="237.8" stroke="#008080" stroke-width="1"/>
<rect x="965" y="217" width="1" height="17" fill="#ff0000"/>
<rect x="961" y="219" width="8" height="15" fill="#ff0000"/>
<line x1="965.5" y1="290.5" x2="972.5" y2="285.8" stroke="#ff0000" stroke-width="1"/>
<line x1="965.5" y1="237.8" x2="972.5" y2="233.8" stroke="#008080" stroke-width="1"/>
<rect x="972" y="210" width="1" height="19" fill="#ff0000"/>
<rect x="968" y="212" width="8" height="15" fill="#ff0000"/>
<line x1="972.5" y1="285.8" x2="979.5" y2="281.0" stroke="#ff0000" stroke-width="1"/>
<line x1="972.5" y1="233.8" x2="979.5" y2="230.2" stroke="#008080" stroke-width="1"/>
<rect x="979" y="213" width="1" height="15" fill="#ff0000"/>
<rect x="975" y="215" width="8" height="11" fill="#ff0000"/>
<line x1="979.5" y1="281.0" x2="986.5" y2="276.3" stroke="#ff0000" stroke-width="1"/>
<line x1="979.5" y1="230.2" x2="986.5" y2="227.2" stroke="#008080" stroke-width="1"/>
<rect x="986" y="211" width="1" height="10" fill="#ff0000"/>
<rect x="982" y="210" width="8" height="1" fill="#ff0000"/>
<line x1="986.5" y1="276.3" x2="993.5" y2="271.6" stroke="#ff0000" stroke-width="1"/>
<line x1="986.5" y1="227.2" x2="993.5" y2="221.8" stroke="#008080" stroke-width="1"/>
<rect x="993" y="204" width="1" height="14" fill="#ff0000"/>
<rect x="989" y="204" width="8" height="12" fill="#ff0000"/>
<line x1="993.5" y1="271.6" x2="1000.5" y2="266.8" stroke="#ff0000" stroke-width="1"/>
<line x1="993.5" y1="221.8" x2="1000.5" y2="214.7" stroke="#008080" stroke-width="1"/>
<rect x="1000" y="186" width="1" height="13" fill="#ff0000"/>
<rect x="996" y="186" width="8" height="12" fill="#ff0000"/>
<line x1="1000.5" y1="266.8" x2="1007.5" y2="261.7" stroke="#ff0000" stroke-width="1"/>
<line x1="1000.5" y1="214.7" x2="1007.5" y2="206.2" stroke="#008080" stroke-width="1"/>
<rect x="1007" y="179" width="1" height="18" fill="#ff0000"/>
<rect x="1003" y="179" width="8" height="3" fill="#ff0000"/>
<line x1="1007.5" y1="261.7" x2="1014.5" y2="256.3" stroke="#ff0000" stroke-width="1"/>
<line x1="1007.5" y1="206.2" x2="1014.5" y2="200.2" stroke="#008080" stroke-width="1"/>
<rect x="1014" y="175" width="1" height="22" fill="#ff0000"/>
<rect x="1010" y="177" width="8" height="9" fill="#ff0000"/>
<line x1="1014.5" y1="256.3" x2="1021.5" y2="250.8" stroke="#ff0000" stroke-width="1"/>
<line x1="1014.5" y1="200.2" x2="1021.5" y2="194.0" stroke="#008080" stroke-width="1"/>
<rect x="1021" y="170" width="1" height="22" fill="#ff0000"/>
<rect x="1017" y="172" width="8" height="16" fill="#ff0000"/>
<line x1="1021.5" y1="250.8" x2="1028.5" y2="245.1" stroke="#ff0000" stroke-width="1"/>
<line x1="1021.5" y1="194.0" x2="1028.5" y2="187.4" stroke="#008080" stroke-width="1"/>
<line x1="1028.5" y1="245.1" x2="1035.5" y2="239.4" stroke="#ff0000" stroke-width="1"/>
<line x1="1028.5" y1="187.4" x2="1035.5" y2="181.0" stroke="#008080" stroke-width="1"/>
<line x1="1035.5" y1="239.4" x2="1042.5" y2="233.7" stroke="#ff0000" stroke-width="1"/>
<line x1="1035.5" y1="181.0" x2="1042.5" y2="177.3" stroke="#008080" stroke-width="1"/>
<line x1="1042.5" y1="233.7" x2="1049.5" y2="227.8" stroke="#ff0000" stroke-width="1"/>
<line x1="1042.5" y1="177.3" x2="1049.5" y2="175.3" stroke="#008080" stroke-width="1"/>
<line x1="1049.5" y1="227.8" x2="1056.5" y2="221.9" stroke="#ff0000" stroke-width="1"/>
<line x1="1049.5" y1="175.3" x2="1056.5" y2="173.7" stroke="#008080" stroke-width="1"/>
<line x1="1056.5" y1="221.9" x2="1063.5" y2="216.8" stroke="#ff0000" stroke-width="1"/>
<line x1="1056.5" y1="173.7" x2="1063.5" y2="172.5" stroke="#008080" stroke-width="1"/>
<line x1="1063.5" y1="216.8" x2="1070.5" y2="212.1" stroke="#ff0000" stroke-width="1"/>
<line x1="1063.5" y1="172.5" x2="1070.5" y2="172.5" stroke="#008080" stroke-width="1"/>
<line x1="1070.5" y1="212.1" x2="1077.5" y2="207.3" stroke="#ff0000" stroke-width="1"/>
<line x1="1070.5" y1="172.5" x2="1077.5" y2="172.5" stroke="#008080" stroke-width="1"/>
<line x1="1077.5" y1="207.3" x2="1084.5" y2="202.5" stroke="#ff0000" stroke-width="1"/>
<line x1="1077.5" y1="172.5" x2="1084.5" y2="172.5" stroke="#008080" stroke-width="1"/>
<line x1="1084.5" y1="202.5" x2="1091.5" y2="198.7" stroke="#ff0000" stroke-width="1"/>
<line x1="1084.5" y1="172.5" x2="1091.5" y2="172.5" stroke="#008080" stroke-width="1"/>
<line x1="1091.5" y1="198.7" x2="1098.5" y2="194.9" stroke="#ff0000" stroke-width="1"/>
<line x1="1091.5" y1="172.5" x2="1098.5" y2="172.5" stroke="#008080" stroke-width="1"/>
<line x1="1098.5" y1="194.9" x2="1105.5" y2="191.2" stroke="#ff0000" stroke-width="1"/>
<line x1="1098.5" y1="172.5" x2="1105.5" y2="172.5" stroke="#008080" stroke-width="1"/>
<line x1="1105.5" y1="191.2" x2="1112.5" y2="187.8" stroke="#ff0000" stroke-width="1"/>
<line x1="1105.5" y1="172.5" x2="1112.5" y2="172.5" stroke="#008080" stroke-width="1"/>
<line x1="1112.5" y1="187.8" x2="1119.5" y2="185.3" stroke="#ff0000" stroke-width="1"/>
<line x1="1112.5" y1="172.5" x2="1119.5" y2="172.5" stroke="#008080" stroke-width="1"/>
<line x1="1119.5" y1="185.3" x2="1126.5" y2="182.8" stroke="#ff0000" stroke-width="1"/>
<line x1="1119.5" y1="172.5" x2="1126.5" y2="172.5" stroke="#008080" stroke-width="1"/>
<line x1="1126.5" y1="182.8" x2="1133.5" y2="180.2" stroke="#ff0000" stroke-width="1"/>
<line x1="1126.5" y1="172.5" x2="1133.5" y2="172.5" stroke="#008080" stroke-width="1"/>
<line x1="1133.5" y1="180.2" x2="1140.5" y2="178.5" stroke="#ff0000" stroke-width="1"/>
<line x1="1133.5" y1="172.5" x2="1140.5" y2="172.5" stroke="#008080" stroke-width="1"/>
<line x1="1140.5" y1="178.5" x2="1147.5" y2="177.1" stroke="#ff0000" stroke-width="1"/>
<line x1="1140.5" y1="172.5" x2="1147.5" y2="172.5" stroke="#008080" stroke-width="1"/>
<line x1="1147.5" y1="177.1" x2="1154.5" y2="175.7" stroke="#ff0000" stroke-width="1"/>
<line x1="1147.5" y1="172.5" x2="1154.5" y2="172.5" stroke="#008080" stroke-width="1"/>
<line x1="1154.5" y1="175.7" x2="1161.5" y2="174.9" stroke="#ff0000" stroke-width="1"/>
<line x1="1154.5" y1="172.5" x2="1161.5" y2="172.5" stroke="#008080" stroke-width="1"/>
<line x1="1161.5" y1="174.9" x2="1168.5" y2="174.0" stroke="#ff0000" stroke-width="1"/>
<line x1="1161.5" y1="172.5" x2="1168.5" y2="172.5" stroke="#008080" stroke-width="1"/>
<line x1="1168.5" y1="174.0" x2="1175.5" y2="173.3" stroke="#ff0000" stroke-width="1"/>
<line x1="1168.5" y1="172.5" x2="1175.5" y2="172.5" stroke="#008080" stroke-width="1"/>
<line x1="1175.5" y1="173.3" x2="1182.5" y2="173.1" stroke="#ff0000" stroke-width="1"/>
<line x1="1175.5" y1="172.5" x2="1182.5" y2="172.5" stroke="#008080" stroke-width="1"/>
<line x1="1182.5" y1="173.1" x2="1189.5" y2="173.0" stroke="#ff0000" stroke-width="1"/>
<line x1="1182.5" y1="172.5" x2="1189.5" y2="172.5" stroke="#008080" stroke-width="1"/>
<line x1="1189.5" y1="172.5" x2="1196.5" y2="172.5" stroke="#008080" stroke-width="1"/>
<line x1="1196.5" y1="172.5" x2="1203.5" y2="172.5" stroke="#008080" stroke-width="1"/>
<line x1="1203.5" y1="172.5" x2="1210.5" y2="172.5" stroke="#008080" stroke-width="1"/>
<line x1="1210.5" y1="172.5" x2="1217.5" y2="172.5" stroke="#008080" stroke-width="1"/>
<line x1="1217.5" y1="172.5" x2="1224.5" y2="172.5" stroke="#008080" stroke-width="1"/>
<line x1="1224.5" y1="172.5" x2="1231.5" y2="172.5" stroke="#008080" stroke-width="1"/>
<polyline points="244.5,505 244.5,508.5 264,503" fill="none" stroke="#0000ff" stroke-width="1"/>
<polyline points="1021.5,170.5 1025,170.5 1041,175.5" fill="none" stroke="#0000ff" stroke-width="1" stroke-dasharray="6 2"/>
<rect x="66.5" y="581.5" width="5" height="18" fill="#fff" stroke="#ff0000"/>
<rect x="73" y="573" width="6" height="27" fill="#008000"/>
<rect x="80.5" y="581.5" width="5" height="18" fill="#fff" stroke="#ff0000"/>
<rect x="87.5" y="583.5" width="5" height="16" fill="#fff" stroke="#ff0000"/>
<rect x="94.5" y="585.5" width="5" height="14" fill="#fff" stroke="#ff0000"/>
<rect x="101" y="585" width="6" height="15" fill="#008000"/>
<rect x="108.5" y="586.5" width="5" height="13" fill="#fff" stroke="#ff0000"/>
<rect x="115.5" y="580.5" width="5" height="19" fill="#fff" stroke="#ff0000"/>
<rect x="122" y="580" width="6" height="20" fill="#008000"/>
<rect x="129.5" y="585.5" width="5" height="14" fill="#fff" stroke="#ff0000"/>
<rect x="136.5" y="582.5" width="5" height="17" fill="#fff" stroke="#ff0000"/>
<rect x="143.5" y="583.5" width="5" height="16" fill="#fff" stroke="#ff0000"/>
<rect x="150.5" y="582.5" width="5" height="17" fill="#fff" stroke="#ff0000"/>
<rect x="157.5" y="579.5" width="5" height="20" fill="#fff" stroke="#ff0000"/>
<rect x="164" y="580" width="6" height="20" fill="#008000"/>
<rect x="171" y="582" width="6" height="18" fill="#008000"/>
<rect x="178" y="583" width="6" height="17" fill="#008000"/>
<rect x="185.5" y="582.5" width="5" height="17" fill="#fff" stroke="#ff0000"/>
<rect x="192" y="578" width="6" height="22" fill="#008000"/>
<rect x="199" y="581" width="6" height="19" fill="#008000"/>
<rect x="206.5" y="586.5" width="5" height="13" fill="#fff" stroke="#ff0000"/>
<rect x="213" y="585" width="6" height="15" fill="#008000"/>
<rect x="220" y="587" width="6" height="13" fill="#008000"/>
<rect x="227" y="586" width="6" height="14" fill="#008000"/>
<rect x="234" y="588" width="6" height="12" fill="#008000"/>
<rect x="241" y="589" width="6" height="11" fill="#008000"/>
<rect x="248.5" y="584.5" width="5" height="15" fill="#fff" stroke="#ff0000"/>
<rect x="255.5" y="577.5" width="5" height="22" fill="#fff" stroke="#ff0000"/>
<rect x="262.5" y="574.5" width="5" height="25" fill="#fff" stroke="#ff0000"/>
<rect x="269.5" y="572.5" width="5" height="27" fill="#fff" stroke="#ff0000"/>
<rect x="276.5" y="574.5" width="5" height="25" fill="#fff" stroke="#ff0000"/>
<rect x="283.5" y="573.5" width="5" height="26" fill="#fff" stroke="#ff0000"/>
<rect x="290" y="577" width="6" height="23" fill="#008000"/>
<rect x="297.5" y="580.5" width="5" height="19" fill="#fff" stroke="#ff0000"/>
<rect x="304" y="574" width="6" height="26" fill="#008000"/>
<rect x="311.5" y="574.5" width="5" height="25" fill="#fff" stroke="#ff0000"/>
<rect x="318" y="564" width="6" height="36" fill="#008000"/>
<rect x="325.5" y="578.5" width="5" height="21" fill="#fff" stroke="#ff0000"/>
<rect x="332" y="574" width="6" height="26" fill="#008000"/>
<rect x="339.5" y="581.5" width="5" height="18" fill="#fff" stroke="#ff0000"/>
<rect x="346" y="581" width="6" height="19" fill="#008000"/>
<rect x="353" y="582" width="6" height="18" fill="#008000"/>
<rect x="360" y="584" width="6" height="16" fill="#008000"/>
<rect x="367.5" y="586.5" width="5" height="13" fill="#fff" stroke="#ff0000"/>
<rect x="374.5" y="581.5" width="5" height="18" fill="#fff" stroke="#ff0000"/>
<rect x="381.5" y="568.5" width="5" height="31" fill="#fff" stroke="#ff0000"/>
<rect x="388.5" y="572.5" width="5" height="27" fill="#fff" stroke="#ff0000"/>
<rect x="395.5" y="570.5" width="5" height="29" fill="#fff" stroke="#ff0000"/>
<rect x="402.5" y="568.5" width="5" height="31" fill="#fff" stroke="#ff0000"/>
<rect x="409.5" y="559.5" width="5" height="40" fill="#fff" stroke="#ff0000"/>
<rect x="416" y="561" width="6" height="39" fill="#008000"/>
<rect x="423.5" y="562.5" width="5" height="37" fill="#fff" stroke="#ff0000"/>
<rect x="430.5" y="550.5" width="5" height="49" fill="#fff" stroke="#ff0000"/>
<rect x="437.5" y="554.5" width="5" height="45" fill="#fff" stroke="#ff0000"/>
<rect x="444.5" y="544.5" width="5" height="55" fill="#fff" stroke="#ff0000"/>
<rect x="451.5" y="548.5" width="5" height="51" fill="#fff" stroke="#ff0000"/>
<rect x="458" y="532" width="6" height="68" fill="#008000"/>
<rect x="465.5" y="556.5" width="5" height="43" fill="#fff" stroke="#ff0000"/>
<rect x="472.5" y="558.5" width="5" height="41" fill="#fff" stroke="#ff0000"/>
<rect x="479.5" y="564.5" width="5" height="35" fill="#fff" stroke="#ff0000"/>
<rect x="486.5" y="566.5" width="5" height="33" fill="#fff" stroke="#ff0000"/>
<rect x="493.5" y="560.5" width="5" height="39" fill="#fff" stroke="#ff0000"/>
<rect x="500.5" y="552.5" width="5" height="47" fill="#fff" stroke="#ff0000"/>
<rect x="507" y="562" width="6" height="38" fill="#008000"/>
<rect x="514.5" y="554.5" width="5" height="45" fill="#fff" stroke="#ff0000"/>
<rect x="521" y="540" width="6" height="60" fill="#008000"/>
<rect x="528" y="561" width="6" height="39" fill="#008000"/>
<rect x="535" y="567" width="6" height="33" fill="#008000"/>
<rect x="542.5" y="567.5" width="5" height="32" fill="#fff" stroke="#ff0000"/>
<rect x="549.5" y="559.5" width="5" height="40" fill="#fff" stroke="#ff0000"/>
<rect x="556" y="555" width="6" height="45" fill="#008000"/>
<rect x="563.5" y="566.5" width="5" height="33" fill="#fff" stroke="#ff0000"/>
<rect x="570.5" y="564.5" width="5" height="35" fill="#fff" stroke="#ff0000"/>
<rect x="577.5" y="553.5" width="5" height="46" fill="#fff" stroke="#ff0000"/>
<rect x="584.5" y="556.5" width="5" height="43" fill="#fff" stroke="#ff0000"/>
<rect x="591.5" y="565.5" width="5" height="34" fill="#fff" stroke="#ff0000"/>
<rect x="598" y="567" width="6" height="33" fill="#008000"/>
<rect x="605.5" y="564.5" width="5" height="35" fill="#fff" stroke="#ff0000"/>
<rect x="612" y="572" width="6" height="28" fill="#008000"/>
<rect x="619.5" y="580.5" width="5" height="19" fill="#fff" stroke="#ff0000"/>
<rect x="626" y="579" width="6" height="21" fill="#008000"/>
<rect x="633.5" y="575.5" width="5" height="24" fill="#fff" stroke="#ff0000"/>
<rect x="640.5" y="570.5" width="5" height="29" fill="#fff" stroke="#ff0000"/>
<rect x="647" y="565" width="6" height="35" fill="#008000"/>
<rect x="654.5" y="569.5" width="5" height="30" fill="#fff" stroke="#ff0000"/>
<rect x="661.5" y="564.5" width="5" height="35" fill="#fff" stroke="#ff0000"/>
<rect x="668.5" y="569.5" width="5" height="30" fill="#fff" stroke="#ff0000"/>
<rect x="675" y="568" width="6" height="32" fill="#008000"/>
<rect x="682.5" y="572.5" width="5" height="27" fill="#fff" stroke="#ff0000"/>
<rect x="689" y="567" width="6" height="33" fill="#008000"/>
<rect x="696" y="573" width="6" height="27" fill="#008000"/>
<rect x="703.5" y="576.5" width="5" height="23" fill="#fff" stroke="#ff0000"/>
<rect x="710" y="577" width="6" height="23" fill="#008000"/>
<rect x="717" y="578" width="6" height="22" fill="#008000"/>
<rect x="724.5" y="578.5" width="5" height="21" fill="#fff" stroke="#ff0000"/>
<rect x="731" y="578" width="6" height="22" fill="#008000"/>
<rect x="738" y="573" width="6" height="27" fill="#008000"/>
<rect x="745" y="578" width="6" height="22" fill="#008000"/>
<rect x="752.5" y="582.5" width="5" height="17" fill="#fff" stroke="#ff0000"/>
<rect x="759.5" y="583.5" width="5" height="16" fill="#fff" stroke="#ff0000"/>
<rect x="766.5" y="585.5" width="5" height="14" fill="#fff" stroke="#ff0000"/>
<rect x="773.5" y="583.5" width="5" height="16" fill="#fff" stroke="#ff0000"/>
<rect x="780.5" y="577.5" width="5" height="22" fill="#fff" stroke="#ff0000"/>
<rect x="787.5" y="580.5" width="5" height="19" fill="#fff" stroke="#ff0000"/>
<rect x="794.5" y="580.5" width="5" height="19" fill="#fff" stroke="#ff0000"/>
<rect x="801" y="579" width="6" height="21" fill="#008000"/>
<rect x="808.5" y="573.5" width="5" height="26" fill="#fff" stroke="#ff0000"/>
<rect x="815.5" y="574.5" width="5" height="25" fill="#fff" stroke="#ff0000"/>
<rect x="822.5" y="569.5" width="5" height="30" fill="#fff" stroke="#ff0000"/>
<rect x="829" y="566" width="6" height="34" fill="#008000"/>
<rect x="836.5" y="574.5" width="5" height="25" fill="#fff" stroke="#ff0000"/>
<rect x="843" y="572" width="6" height="28" fill="#008000"/>
<rect x="850" y="575" width="6" height="25" fill="#008000"/>
<rect x="857.5" y="572.5" width="5" height="27" fill="#fff" stroke="#ff0000"/>
<rect x="864" y="575" width="6" height="25" fill="#008000"/>
<rect x="871.5" y="575.5" width="5" height="24" fill="#fff" stroke="#ff0000"/>
<rect x="878.5" y="569.5" width="5" height="30" fill="#fff" stroke="#ff0000"/>
<rect x="885.5" y="572.5" width="5" height="27" fill="#fff" stroke="#ff0000"/>
<rect x="892.5" y="565.5" width="5" height="34" fill="#fff" stroke="#ff0000"/>
<rect x="899.5" y="554.5" width="5" height="45" fill="#fff" stroke="#ff0000"/>
<rect x="906.5" y="552.5" width="5" height="47" fill="#fff" stroke="#ff0000"/>
<rect x="913.5" y="553.5" width="5" height="46" fill="#fff" stroke="#ff0000"/>
<rect x="920.5" y="554.5" width="5" height="45" fill="#fff" stroke="#ff0000"/>
<rect x="927.5" y="553.5" width="5" height="46" fill="#fff" stroke="#ff0000"/>
<rect x="934" y="544" width="6" height="56" fill="#008000"/>
<rect x="941" y="554" width="6" height="46" fill="#008000"/>
<rect x="948.5" y="557.5" width="5" height="42" fill="#fff" stroke="#ff0000"/>
<rect x="955.5" y="564.5" width="5" height="35" fill="#fff" stroke="#ff0000"/>
<rect x="962.5" y="550.5" width="5" height="49" fill="#fff" stroke="#ff0000"/>
<rect x="969" y="551" width="6" height="49" fill="#008000"/>
<rect x="976.5" y="561.5" width="5" height="38" fill="#fff" stroke="#ff0000"/>
<rect x="983" y="558" width="6" height="42" fill="#008000"/>
<rect x="990.5" y="558.5" width="5" height="41" fill="#fff" stroke="#ff0000"/>
<rect x="997.5" y="550.5" width="5" height="49" fill="#fff" stroke="#ff0000"/>
<rect x="1004.5" y="546.5" width="5" height="53" fill="#fff" stroke="#ff0000"/>
<rect x="1011" y="548" width="6" height="52" fill="#008000"/>
<rect x="1018.5" y="557.5" width="5" height="42" fill="#fff" stroke="#ff0000"/>
<rect x="74.5" y="632.5" width="3" height="3" fill="#fff" stroke="#008000"/>
<rect x="81.5" y="634.5" width="3" height="3" fill="#fff" stroke="#008000"/>
<rect x="88.5" y="634.5" width="3" height="4" fill="#fff" stroke="#008000"/>
<rect x="96" y="636" width="2" height="1" fill="#008000"/>
<rect x="102.5" y="637.5" width="3" height="4" fill="#fff" stroke="#008000"/>
<rect x="109.5" y="639.5" width="3" height="4" fill="#fff" stroke="#008000"/>
<rect x="138" y="637" width="2" height="1" fill="#ff7070"/>
<rect x="144.5" y="634.5" width="3" height="3" fill="#fff" stroke="#ff7070"/>
<rect x="151.5" y="632.5" width="3" height="3" fill="#fff" stroke="#ff7070"/>
<rect x="158.5" y="631.5" width="3" height="3" fill="#fff" stroke="#ff7070"/>
<rect x="173" y="634" width="2" height="1" fill="#008000"/>
<rect x="179.5" y="635.5" width="3" height="3" fill="#fff" stroke="#008000"/>
<rect x="187" y="636" width="2" height="1" fill="#008000"/>
<rect x="193.5" y="637.5" width="3" height="3" fill="#fff" stroke="#008000"/>
<rect x="200.5" y="641.5" width="3" height="3" fill="#fff" stroke="#008000"/>
<rect x="207.5" y="641.5" width="3" height="4" fill="#fff" stroke="#008000"/>
<rect x="214.5" y="644.5" width="3" height="5" fill="#fff" stroke="#008000"/>
<rect x="221.5" y="648.5" width="3" height="8" fill="#fff" stroke="#008000"/>
<rect x="228.5" y="653.5" width="3" height="11" fill="#fff" stroke="#008000"/>
<rect x="235.5" y="658.5" width="3" height="10" fill="#fff" stroke="#008000"/>
<rect x="242.5" y="662.5" width="3" height="8" fill="#fff" stroke="#008000"/>
<rect x="250" y="664" width="2" height="1" fill="#008000"/>
<rect x="256.5" y="655.5" width="3" height="6" fill="#fff" stroke="#ff7070"/>
<rect x="263.5" y="647.5" width="3" height="8" fill="#fff" stroke="#ff7070"/>
<rect x="270.5" y="641.5" width="3" height="10" fill="#fff" stroke="#ff7070"/>
<rect x="277.5" y="638.5" width="3" height="8" fill="#fff" stroke="#ff7070"/>
<rect x="284.5" y="635.5" width="3" height="8" fill="#fff" stroke="#ff7070"/>
<rect x="291.5" y="634.5" width="3" height="6" fill="#fff" stroke="#ff7070"/>
<rect x="298.5" y="633.5" width="3" height="5" fill="#fff" stroke="#ff7070"/>
<rect x="306" y="636" width="2" height="1" fill="#ff7070"/>
<rect x="312.5" y="633.5" width="3" height="3" fill="#fff" stroke="#ff7070"/>
<rect x="320" y="634" width="2" height="1" fill="#ff7070"/>
<rect x="327" y="633" width="2" height="1" fill="#ff7070"/>
<rect x="334" y="633" width="2" height="1" fill="#ff7070"/>
<rect x="354.5" y="635.5" width="3" height="3" fill="#fff" stroke="#008000"/>
<rect x="361.5" y="637.5" width="3" height="5" fill="#fff" stroke="#008000"/>
<rect x="368.5" y="640.5" width="3" height="5" fill="#fff" stroke="#008000"/>
<rect x="376" y="642" width="2" height="1" fill="#008000"/>
<rect x="383" y="639" width="2" height="1" fill="#ff7070"/>
<rect x="389.5" y="636.5" width="3" height="3" fill="#fff" stroke="#ff7070"/>
<rect x="396.5" y="633.5" width="3" height="4" fill="#fff" stroke="#ff7070"/>
<rect x="403.5" y="631.5" width="3" height="4" fill="#fff" stroke="#ff7070"/>
<rect x="410.5" y="630.5" width="3" height="3" fill="#fff" stroke="#ff7070"/>
<rect x="418" y="632" width="2" height="1" fill="#ff7070"/>
<rect x="425" y="631" width="2" height="1" fill="#ff7070"/>
<rect x="439" y="631" width="2" height="1" fill="#ff7070"/>
<rect x="459.5" y="633.5" width="3" height="3" fill="#fff" stroke="#008000"/>
<rect x="466.5" y="634.5" width="3" height="3" fill="#fff" stroke="#008000"/>
<rect x="473.5" y="636.5" width="3" height="2" fill="#fff" stroke="#008000"/>
<rect x="480.5" y="637.5" width="3" height="2" fill="#fff" stroke="#008000"/>
<rect x="487.5" y="638.5" width="3" height="2" fill="#fff" stroke="#008000"/>
<rect x="502" y="636" width="2" height="1" fill="#ff7070"/>
<rect x="508.5" y="634.5" width="3" height="2" fill="#fff" stroke="#ff7070"/>
<rect x="515.5" y="632.5" width="3" height="2" fill="#fff" stroke="#ff7070"/>
<rect x="523" y="633" width="2" height="1" fill="#ff7070"/>
<rect x="529.5" y="635.5" width="3" height="2" fill="#fff" stroke="#008000"/>
<rect x="536.5" y="638.5" width="3" height="5" fill="#fff" stroke="#008000"/>
<rect x="543.5" y="640.5" width="3" height="3" fill="#fff" stroke="#008000"/>
<rect x="558" y="638" width="2" height="1" fill="#ff7070"/>
<rect x="564.5" y="637.5" width="3" height="2" fill="#fff" stroke="#ff7070"/>
<rect x="571.5" y="634.5" width="3" height="3" fill="#fff" stroke="#ff7070"/>
<rect x="578.5" y="633.5" width="3" height="3" fill="#fff" stroke="#ff7070"/>
<rect x="585.5" y="633.5" width="3" height="2" fill="#fff" stroke="#ff7070"/>
<rect x="592.5" y="632.5" width="3" height="2" fill="#fff" stroke="#ff7070"/>
<rect x="606.5" y="635.5" width="3" height="2" fill="#fff" stroke="#008000"/>
<rect x="613.5" y="637.5" width="3" height="3" fill="#fff" stroke="#008000"/>
<rect x="620.5" y="639.5" width="3" height="3" fill="#fff" stroke="#008000"/>
<rect x="627.5" y="641.5" width="3" height="3" fill="#fff" stroke="#008000"/>
<rect x="641.5" y="638.5" width="3" height="2" fill="#fff" stroke="#ff7070"/>
<rect x="648.5" y="643.5" width="3" height="6" fill="#fff" stroke="#008000"/>
<rect x="655.5" y="647.5" width="3" height="9" fill="#fff" stroke="#008000"/>
<rect x="662.5" y="649.5" width="3" height="2" fill="#fff" stroke="#008000"/>
<rect x="670" y="647" width="2" height="1" fill="#ff7070"/>
<rect x="676.5" y="644.5" width="3" height="2" fill="#fff" stroke="#ff7070"/>
<rect x="683.5" y="640.5" width="3" height="4" fill="#fff" stroke="#ff7070"/>
<rect x="690.5" y="639.5" width="3" height="3" fill="#fff" stroke="#ff7070"/>
<rect x="698" y="641" width="2" height="1" fill="#ff7070"/>
<rect x="704.5" y="643.5" width="3" height="2" fill="#fff" stroke="#008000"/>
<rect x="711.5" y="645.5" width="3" height="4" fill="#fff" stroke="#008000"/>
<rect x="718.5" y="650.5" width="3" height="8" fill="#fff" stroke="#008000"/>
<rect x="725.5" y="653.5" width="3" height="7" fill="#fff" stroke="#008000"/>
<rect x="732.5" y="656.5" width="3" height="6" fill="#fff" stroke="#008000"/>
<rect x="739.5" y="659.5" width="3" height="7" fill="#fff" stroke="#008000"/>
<rect x="746.5" y="663.5" width="3" height="7" fill="#fff" stroke="#008000"/>
<rect x="753.5" y="666.5" width="3" height="4" fill="#fff" stroke="#008000"/>
<rect x="760.5" y="667.5" width="3" height="3" fill="#fff" stroke="#008000"/>
<rect x="775" y="666" width="2" height="1" fill="#ff7070"/>
<rect x="781.5" y="663.5" width="3" height="3" fill="#fff" stroke="#ff7070"/>
<rect x="788.5" y="661.5" width="3" height="3" fill="#fff" stroke="#ff7070"/>
<rect x="795.5" y="656.5" width="3" height="5" fill="#fff" stroke="#ff7070"/>
<rect x="802.5" y="651.5" width="3" height="7" fill="#fff" stroke="#ff7070"/>
<rect x="809.5" y="643.5" width="3" height="10" fill="#fff" stroke="#ff7070"/>
<rect x="816.5" y="639.5" width="3" height="8" fill="#fff" stroke="#ff7070"/>
<rect x="823.5" y="635.5" width="3" height="8" fill="#fff" stroke="#ff7070"/>
<rect x="830.5" y="637.5" width="3" height="5" fill="#fff" stroke="#ff7070"/>
<rect x="837.5" y="638.5" width="3" height="2" fill="#fff" stroke="#ff7070"/>
<rect x="852" y="641" width="2" height="1" fill="#008000"/>
<rect x="859" y="639" width="2" height="1" fill="#ff7070"/>
<rect x="879.5" y="637.5" width="3" height="2" fill="#fff" stroke="#ff7070"/>
<rect x="886.5" y="635.5" width="3" height="3" fill="#fff" stroke="#ff7070"/>
<rect x="893.5" y="633.5" width="3" height="3" fill="#fff" stroke="#ff7070"/>
<rect x="900.5" y="631.5" width="3" height="3" fill="#fff" stroke="#ff7070"/>
<rect x="907.5" y="630.5" width="3" height="3" fill="#fff" stroke="#ff7070"/>
<rect x="914.5" y="630.5" width="3" height="2" fill="#fff" stroke="#ff7070"/>
<rect x="922" y="630" width="2" height="1" fill="#ff7070"/>
<rect x="928.5" y="629.5" width="3" height="2" fill="#fff" stroke="#ff7070"/>
<rect x="943" y="630" width="2" height="1" fill="#008000"/>
<rect x="950" y="632" width="2" height="1" fill="#008000"/>
<rect x="971" y="631" width="2" height="1" fill="#008000"/>
<rect x="999" y="629" width="2" height="1" fill="#ff7070"/>
<rect x="1006" y="629" width="2" height="1" fill="#ff7070"/>
<rect x="1013" y="630" width="2" height="1" fill="#008000"/>
<rect x="1111" y="629" width="2" height="1" fill="#008000"/>
<rect x="1118" y="629" width="2" height="1" fill="#008000"/>
<rect x="1124.5" y="632.5" width="3" height="6" fill="#fff" stroke="#008000"/>
<rect x="1131.5" y="636.5" width="3" height="6" fill="#fff" stroke="#008000"/>
<rect x="1138.5" y="640.5" width="3" height="7" fill="#fff" stroke="#008000"/>
<rect x="1145.5" y="643.5" width="3" height="7" fill="#fff" stroke="#008000"/>
<rect x="1152.5" y="646.5" width="3" height="5" fill="#fff" stroke="#008000"/>
<rect x="1159.5" y="648.5" width="3" height="4" fill="#fff" stroke="#008000"/>
<rect x="1166.5" y="650.5" width="3" height="2" fill="#fff" stroke="#008000"/>
<rect x="1173.5" y="651.5" width="3" height="2" fill="#fff" stroke="#008000"/>
<rect x="1180.5" y="652.5" width="3" height="2" fill="#fff" stroke="#008000"/>
<rect x="1187.5" y="652.5" width="3" height="2" fill="#fff" stroke="#008000"/>
<rect x="1195" y="653" width="2" height="1" fill="#008000"/>
<rect x="1202" y="653" width="2" height="1" fill="#008000"/>
</svg>
</body></html>
